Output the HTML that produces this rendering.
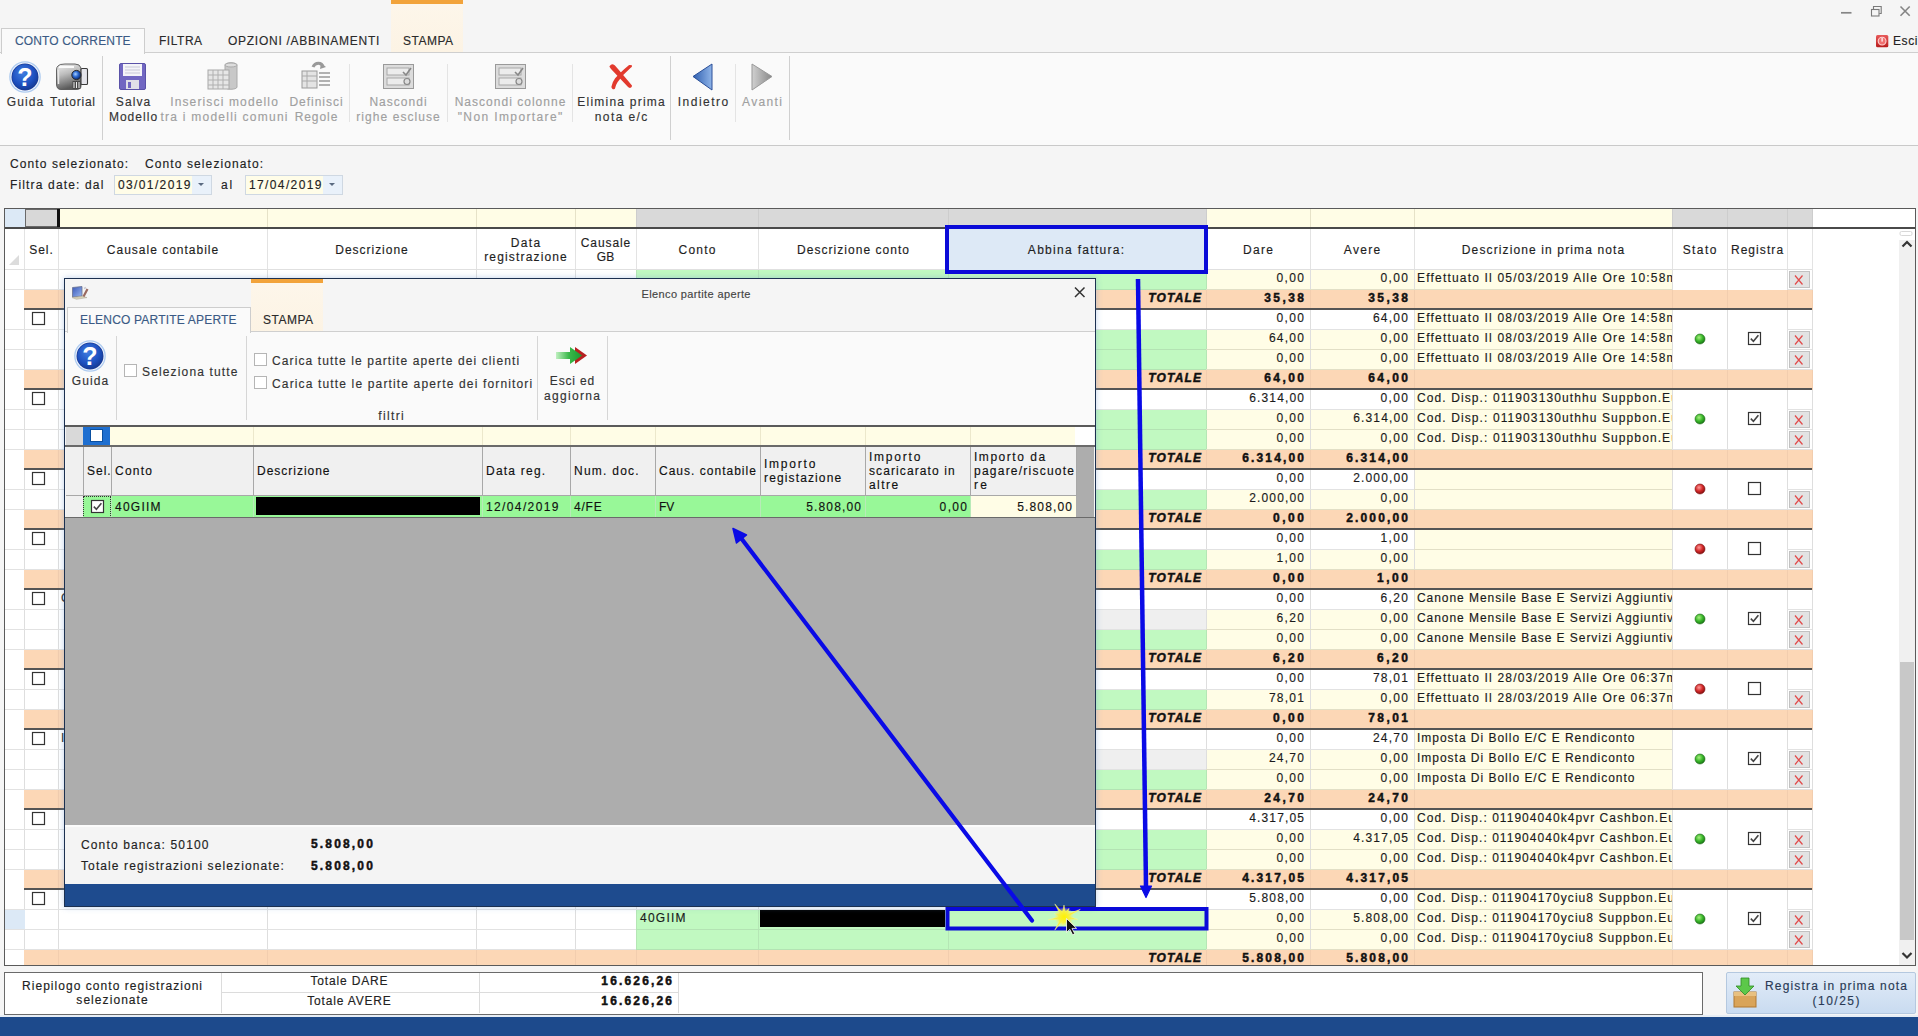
<!DOCTYPE html>
<html><head><meta charset="utf-8"><style>
html,body{margin:0;padding:0;}
body{width:1918px;height:1036px;overflow:hidden;position:relative;background:#f5f5f5;font-family:"Liberation Sans", sans-serif;font-size:12px;color:#1e1e1e;}
div{position:absolute;box-sizing:border-box;}
.t{white-space:nowrap;-webkit-text-stroke:0.15px currentColor;}
svg{position:absolute;overflow:visible;}
</style></head><body>

<svg style="left:1838px;top:8px" width="16" height="10"><path d="M3 4.8H13.5" stroke="#858585" stroke-width="1.7"/></svg>
<svg style="left:1866px;top:0px" width="20" height="20"><rect x="5.5" y="9.5" width="7.5" height="6.5" fill="none" stroke="#7a7a7a" stroke-width="1.1"/><path d="M7.5 9.2V6.5H15.2V13.5H13.2" fill="none" stroke="#7a7a7a" stroke-width="1.1"/></svg>
<svg style="left:1898px;top:4px" width="14" height="14"><path d="M2.5 2.5L11.7 11.7M11.7 2.5L2.5 11.7" stroke="#858585" stroke-width="1.6"/></svg>
<svg style="left:1875px;top:33.5px" width="14" height="14"><defs><linearGradient id="esc" x1="0" y1="0" x2="0" y2="1"><stop offset="0" stop-color="#e85a5a"/><stop offset="1" stop-color="#b81c1c"/></linearGradient></defs><rect x="1" y="1" width="12.3" height="12.3" rx="1.5" fill="url(#esc)"/><circle cx="7.1" cy="7.1" r="3.9" fill="#f07070" stroke="#ffd0d0" stroke-width="1.1"/><rect x="6.5" y="4" width="1.2" height="3.6" fill="#fff"/></svg>
<div class="t" style="top:32.84px;font-size:12px;line-height:16px;color:#222;letter-spacing:0.577px;left:1893px;">Esci</div>
<div style="left:391px;top:0px;width:72px;height:4px;background:#f2a33a;"></div>
<div style="left:391px;top:4px;width:72px;height:48px;background:linear-gradient(#fdf6ea,#fcf3e4);"></div>
<div style="left:0px;top:52px;width:1918px;height:1px;background:#cfcfcf;"></div>
<div style="left:0px;top:53px;width:1918px;height:92px;background:#fafafa;"></div>
<div style="left:0px;top:145px;width:1918px;height:1px;background:#c9c9c9;"></div>
<div style="left:1px;top:28px;width:144px;height:26px;background:#fafafa;border:1px solid #cdcdcd;border-bottom:none;"></div>
<div class="t" style="top:32.84px;font-size:12px;line-height:16px;color:#3a5a85;letter-spacing:0.14px;left:15px;">CONTO CORRENTE</div>
<div class="t" style="top:32.84px;font-size:12px;line-height:16px;color:#2a2a2a;letter-spacing:0.534px;left:159px;">FILTRA</div>
<div class="t" style="top:32.84px;font-size:12px;line-height:16px;color:#2a2a2a;letter-spacing:0.734px;left:228px;">OPZIONI /ABBINAMENTI</div>
<div class="t" style="top:32.84px;font-size:12px;line-height:16px;color:#2a2a2a;letter-spacing:0.492px;left:403px;">STAMPA</div>
<div style="left:102px;top:56px;width:1px;height:84px;background:#d0d0d0;"></div>
<div style="left:349px;top:64px;width:1px;height:58px;background:#e4e4e4;"></div>
<div style="left:447px;top:64px;width:1px;height:58px;background:#e4e4e4;"></div>
<div style="left:572px;top:64px;width:1px;height:58px;background:#e4e4e4;"></div>
<div style="left:670px;top:56px;width:1px;height:84px;background:#d0d0d0;"></div>
<div style="left:735px;top:64px;width:1px;height:58px;background:#e4e4e4;"></div>
<div style="left:789px;top:56px;width:1px;height:84px;background:#d0d0d0;"></div>
<svg style="left:8px;top:60px" width="34" height="34"><defs><radialGradient id="gq25" cx="42%" cy="35%" r="70%"><stop offset="0" stop-color="#3f7ee0"/><stop offset="0.65" stop-color="#1d4fbf"/><stop offset="1" stop-color="#15388f"/></radialGradient></defs>
<circle cx="17" cy="17" r="15.8" fill="#aecbf0"/><circle cx="17" cy="17" r="14.5" fill="#f4f8ff"/><circle cx="17" cy="17" r="13.5" fill="#1a3c96"/><circle cx="17" cy="17" r="12.700000000000001" fill="url(#gq25)"/>
<text x="17" y="26.3" text-anchor="middle" font-family="Liberation Sans" font-weight="bold" font-size="25" fill="#fff">?</text></svg>
<div class="t" style="top:93.84px;font-size:12px;line-height:16px;color:#333;letter-spacing:1.119px;left:-474.44px;width:1000px;text-align:center;">Guida</div>
<svg style="left:55px;top:62px" width="34" height="30"><defs><linearGradient id="cam" x1="0" y1="0" x2="0.3" y2="1"><stop offset="0" stop-color="#f2f2f2"/><stop offset="0.45" stop-color="#bdbdbd"/><stop offset="1" stop-color="#5a5a5a"/></linearGradient><radialGradient id="lens" cx="40%" cy="40%" r="60%"><stop offset="0" stop-color="#a8d0ff"/><stop offset="0.5" stop-color="#2a68d0"/><stop offset="1" stop-color="#0c2a70"/></radialGradient></defs>
<path d="M3 4Q4 2 10 2H20Q25 2 26 6V24Q26 27.5 21 27.5H6Q1.5 27.5 1.5 22V8Q1.5 5 3 4z" fill="url(#cam)" stroke="#555" stroke-width="0.9"/>
<path d="M4 5H19" stroke="#fafafa" stroke-width="2"/><path d="M3.5 8V22" stroke="#e6e6e6" stroke-width="1.5"/>
<rect x="26" y="6.5" width="6.5" height="16" rx="1" fill="#e4e4ea" stroke="#3a3a3a" stroke-width="1.1"/>
<circle cx="21.4" cy="13" r="4.6" fill="url(#lens)" stroke="#2a2a2a" stroke-width="1"/>
<rect x="17.5" y="19" width="8" height="8" fill="#4a4a4a"/><path d="M19 20v6M21.5 20v6M24 20v6" stroke="#f0f0f0" stroke-width="1"/></svg>
<div class="t" style="top:93.84px;font-size:12px;line-height:16px;color:#333;letter-spacing:0.775px;left:-427.11px;width:1000px;text-align:center;">Tutorial</div>
<svg style="left:119px;top:63px" width="27" height="27"><rect x="0.5" y="0.5" width="26" height="26" rx="1.5" fill="#7167c2" stroke="#5a52a8"/>
<rect x="4" y="1" width="19" height="12" fill="#f4f4f8"/><path d="M6 4h15M6 7h15M6 10h15" stroke="#c8c8d8" stroke-width="1"/>
<rect x="7" y="17" width="13" height="9" fill="#e0e0e8"/><rect x="9" y="19" width="3" height="6" fill="#7167c2"/></svg>
<div class="t" style="top:93.84px;font-size:12px;line-height:16px;color:#333;letter-spacing:1.101px;left:-366.45px;width:1000px;text-align:center;">Salva</div>
<div class="t" style="top:108.84px;font-size:12px;line-height:16px;color:#333;letter-spacing:1.038px;left:-366.48px;width:1000px;text-align:center;">Modello</div>
<svg style="left:207px;top:61px" width="33" height="30"><path d="M18 4c0-3 12-3 12 0v22c0 3-12 3-12 0z" fill="#c8c8c8" stroke="#aaa"/><ellipse cx="24" cy="4" rx="6" ry="2" fill="#ddd" stroke="#aaa"/>
<rect x="1" y="9" width="21" height="19" fill="#e6e6e6" stroke="#a8a8a8"/><path d="M1 14h21M1 19h21M1 24h21M6 9v19M11 9v19M16 9v19" stroke="#b0b0b0" stroke-width="1"/></svg>
<div class="t" style="top:93.84px;font-size:12px;line-height:16px;color:#a0a0a0;letter-spacing:1.144px;left:-275.43px;width:1000px;text-align:center;">Inserisci modello</div>
<div class="t" style="top:108.84px;font-size:12px;line-height:16px;color:#a0a0a0;letter-spacing:1.24px;left:-275.38px;width:1000px;text-align:center;">tra i modelli comuni</div>
<svg style="left:301px;top:61px" width="31" height="29"><path d="M12 6c2-5 9-5 10 0" fill="none" stroke="#999" stroke-width="3"/><path d="M20 2l5 4-6 2z" fill="#999"/>
<rect x="1" y="10" width="15" height="17" fill="#e4e4e4" stroke="#9a9a9a"/><path d="M1 15h15M1 20h15M6 10v17" stroke="#aaa"/>
<path d="M18 12h11M18 16h11M18 20h11M18 24h11" stroke="#999" stroke-width="1.6"/></svg>
<div class="t" style="top:93.84px;font-size:12px;line-height:16px;color:#a0a0a0;letter-spacing:0.975px;left:-183.51px;width:1000px;text-align:center;">Definisci</div>
<div class="t" style="top:108.84px;font-size:12px;line-height:16px;color:#a0a0a0;letter-spacing:0.943px;left:-183.53px;width:1000px;text-align:center;">Regole</div>
<svg style="left:383px;top:64px" width="31" height="26"><rect x="0.5" y="0.5" width="30" height="24" fill="#dcdcdc" stroke="#9a9a9a"/>
<rect x="4" y="4" width="22" height="7" fill="#ececec" stroke="#a8a8a8"/><rect x="4" y="14" width="22" height="7" fill="#ececec" stroke="#a8a8a8"/>
<path d="M20 8l3 3 5-7" fill="none" stroke="#888" stroke-width="1.6"/><circle cx="24" cy="17.5" r="3" fill="#ddd" stroke="#888" stroke-width="1.2"/></svg>
<div class="t" style="top:93.84px;font-size:12px;line-height:16px;color:#a0a0a0;letter-spacing:1.013px;left:-101.49px;width:1000px;text-align:center;">Nascondi</div>
<div class="t" style="top:108.84px;font-size:12px;line-height:16px;color:#a0a0a0;letter-spacing:1.057px;left:-101.47px;width:1000px;text-align:center;">righe escluse</div>
<svg style="left:495px;top:64px" width="31" height="26"><rect x="0.5" y="0.5" width="30" height="24" fill="#dcdcdc" stroke="#9a9a9a"/>
<rect x="4" y="4" width="22" height="7" fill="#ececec" stroke="#a8a8a8"/><rect x="4" y="14" width="22" height="7" fill="#ececec" stroke="#a8a8a8"/>
<path d="M20 8l3 3 5-7" fill="none" stroke="#888" stroke-width="1.6"/><circle cx="24" cy="17.5" r="3" fill="#ddd" stroke="#888" stroke-width="1.2"/></svg>
<div class="t" style="top:93.84px;font-size:12px;line-height:16px;color:#a0a0a0;letter-spacing:1.018px;left:10.51px;width:1000px;text-align:center;">Nascondi colonne</div>
<div class="t" style="top:108.84px;font-size:12px;line-height:16px;color:#a0a0a0;letter-spacing:1.379px;left:10.69px;width:1000px;text-align:center;">"Non Importare"</div>
<svg style="left:609px;top:63px" width="24" height="27"><path d="M1.5 3.5Q3 1.5 5 3Q12 11 22 23Q21.5 24.5 20 23.5Q11 14 2.5 5z" fill="#e23a2e" stroke="#e23a2e" stroke-width="2" stroke-linejoin="round"/><path d="M21.5 3.5Q22.5 2.5 21 4Q13 11 8 18Q5.5 22 5 25Q4 25.5 3.5 24Q4 20 7 16Q12 10 20.5 3z" fill="#e23a2e" stroke="#e23a2e" stroke-width="2.2" stroke-linejoin="round"/></svg>
<div class="t" style="top:93.84px;font-size:12px;line-height:16px;color:#333;letter-spacing:1.223px;left:121.61px;width:1000px;text-align:center;">Elimina prima</div>
<div class="t" style="top:108.84px;font-size:12px;line-height:16px;color:#333;letter-spacing:1.378px;left:121.69px;width:1000px;text-align:center;">nota e/c</div>
<svg style="left:692px;top:63px" width="22" height="28"><defs><linearGradient id="lt" x1="0" y1="0" x2="1" y2="0"><stop offset="0" stop-color="#2f5fb0"/><stop offset="1" stop-color="#8fb4e8"/></linearGradient></defs><path d="M1 13.5L20 1v26z" fill="url(#lt)" stroke="#2a4f98" stroke-width="1"/></svg>
<div class="t" style="top:93.84px;font-size:12px;line-height:16px;color:#333;letter-spacing:1.476px;left:203.74px;width:1000px;text-align:center;">Indietro</div>
<svg style="left:750px;top:63px" width="23" height="28"><defs><linearGradient id="rt" x1="0" y1="0" x2="1" y2="0"><stop offset="0" stop-color="#d0d0d0"/><stop offset="1" stop-color="#888"/></linearGradient></defs><path d="M22 13.5L2 1v26z" fill="url(#rt)" stroke="#999" stroke-width="1"/></svg>
<div class="t" style="top:93.84px;font-size:12px;line-height:16px;color:#a0a0a0;letter-spacing:1.34px;left:262.67px;width:1000px;text-align:center;">Avanti</div>
<div class="t" style="top:155.84px;font-size:12px;line-height:16px;color:#222;letter-spacing:1.103px;left:10px;">Conto selezionato:</div>
<div class="t" style="top:155.84px;font-size:12px;line-height:16px;color:#222;letter-spacing:1.103px;left:145px;">Conto selezionato:</div>
<div class="t" style="top:176.84px;font-size:12px;line-height:16px;color:#222;letter-spacing:1.151px;left:10px;">Filtra date: dal</div>
<div class="t" style="top:176.84px;font-size:12px;line-height:16px;color:#222;letter-spacing:1.78px;left:221px;">al</div>
<div style="left:114px;top:175px;width:98px;height:20px;background:#fffde8;border:1px solid #cfd8e2;"></div>
<div style="left:192px;top:176px;width:19px;height:18px;background:#e9f1fa;"></div>
<svg style="left:198px;top:183px" width="7" height="4"><path d="M0 0h6L3 3z" fill="#5a6a80"/></svg>
<div class="t" style="top:176.84px;font-size:12px;line-height:16px;color:#222;letter-spacing:1.373px;left:118px;">03/01/2019</div>
<div style="left:245px;top:175px;width:98px;height:20px;background:#fffde8;border:1px solid #cfd8e2;"></div>
<div style="left:323px;top:176px;width:19px;height:18px;background:#e9f1fa;"></div>
<svg style="left:329px;top:183px" width="7" height="4"><path d="M0 0h6L3 3z" fill="#5a6a80"/></svg>
<div class="t" style="top:176.84px;font-size:12px;line-height:16px;color:#222;letter-spacing:1.373px;left:249px;">17/04/2019</div>
<div style="left:4px;top:208px;width:1912px;height:758px;background:#fff;border:1px solid #5a5a5a;"></div>
<div style="left:5px;top:209px;width:20px;height:18px;background:#dce9f6;"></div>
<div style="left:25px;top:209px;width:33px;height:18px;background:#d8d8d8;border:1px solid #6a6a6a;"></div>
<div style="left:57px;top:209px;width:3px;height:18px;background:#111;"></div>
<div style="left:60px;top:209px;width:576px;height:18px;background:#fffde6;"></div>
<div style="left:636px;top:209px;width:570px;height:18px;background:#d9d9d9;"></div>
<div style="left:1206px;top:209px;width:466px;height:18px;background:#fffde6;"></div>
<div style="left:1672px;top:209px;width:140px;height:18px;background:#d9d9d9;"></div>
<div style="left:267px;top:209px;width:1px;height:18px;background:#e6e2c8;"></div>
<div style="left:476px;top:209px;width:1px;height:18px;background:#e6e2c8;"></div>
<div style="left:575px;top:209px;width:1px;height:18px;background:#e6e2c8;"></div>
<div style="left:636px;top:209px;width:1px;height:18px;background:#cdcdcd;"></div>
<div style="left:758px;top:209px;width:1px;height:18px;background:#cdcdcd;"></div>
<div style="left:948px;top:209px;width:1px;height:18px;background:#cdcdcd;"></div>
<div style="left:1206px;top:209px;width:1px;height:18px;background:#cdcdcd;"></div>
<div style="left:1310px;top:209px;width:1px;height:18px;background:#e6e2c8;"></div>
<div style="left:1414px;top:209px;width:1px;height:18px;background:#e6e2c8;"></div>
<div style="left:1672px;top:209px;width:1px;height:18px;background:#cdcdcd;"></div>
<div style="left:1727px;top:209px;width:1px;height:18px;background:#cdcdcd;"></div>
<div style="left:1787px;top:209px;width:1px;height:18px;background:#cdcdcd;"></div>
<div style="left:1812px;top:209px;width:1px;height:18px;background:#cdcdcd;"></div>
<div style="left:5px;top:227px;width:1910px;height:2px;background:#4a4a4a;"></div>
<div style="left:24px;top:229px;width:1px;height:41px;background:#e3e3e3;"></div>
<div style="left:58px;top:229px;width:1px;height:41px;background:#e3e3e3;"></div>
<div style="left:267px;top:229px;width:1px;height:41px;background:#e3e3e3;"></div>
<div style="left:476px;top:229px;width:1px;height:41px;background:#e3e3e3;"></div>
<div style="left:575px;top:229px;width:1px;height:41px;background:#e3e3e3;"></div>
<div style="left:636px;top:229px;width:1px;height:41px;background:#e3e3e3;"></div>
<div style="left:758px;top:229px;width:1px;height:41px;background:#e3e3e3;"></div>
<div style="left:948px;top:229px;width:1px;height:41px;background:#e3e3e3;"></div>
<div style="left:1206px;top:229px;width:1px;height:41px;background:#e3e3e3;"></div>
<div style="left:1310px;top:229px;width:1px;height:41px;background:#e3e3e3;"></div>
<div style="left:1414px;top:229px;width:1px;height:41px;background:#e3e3e3;"></div>
<div style="left:1672px;top:229px;width:1px;height:41px;background:#e3e3e3;"></div>
<div style="left:1727px;top:229px;width:1px;height:41px;background:#e3e3e3;"></div>
<div style="left:1787px;top:229px;width:1px;height:41px;background:#e3e3e3;"></div>
<div style="left:1812px;top:229px;width:1px;height:41px;background:#e3e3e3;"></div>
<div style="left:5px;top:269px;width:1807px;height:1px;background:#e0e0e0;"></div>
<svg style="left:8px;top:254px" width="12" height="12"><path d="M11 1V11H1z" fill="#dcdcdc"/></svg>
<div class="t" style="top:241.84px;font-size:12px;line-height:16px;color:#1e1e1e;letter-spacing:0.991px;left:-458.50px;width:1000px;text-align:center;">Sel.</div>
<div class="t" style="top:241.84px;font-size:12px;line-height:16px;color:#1e1e1e;letter-spacing:0.996px;left:-337.00px;width:1000px;text-align:center;">Causale contabile</div>
<div class="t" style="top:241.84px;font-size:12px;line-height:16px;color:#1e1e1e;letter-spacing:0.983px;left:-128.01px;width:1000px;text-align:center;">Descrizione</div>
<div class="t" style="top:234.84px;font-size:12px;line-height:16px;color:#1e1e1e;letter-spacing:1.423px;left:26.21px;width:1000px;text-align:center;">Data</div>
<div class="t" style="top:248.84px;font-size:12px;line-height:16px;color:#1e1e1e;letter-spacing:1.155px;left:26.08px;width:1000px;text-align:center;">registrazione</div>
<div class="t" style="top:234.84px;font-size:12px;line-height:16px;color:#1e1e1e;letter-spacing:0.907px;left:105.95px;width:1000px;text-align:center;">Causale</div>
<div class="t" style="top:248.84px;font-size:12px;line-height:16px;color:#1e1e1e;letter-spacing:0.378px;left:105.69px;width:1000px;text-align:center;">GB</div>
<div class="t" style="top:241.84px;font-size:12px;line-height:16px;color:#1e1e1e;letter-spacing:1.228px;left:197.61px;width:1000px;text-align:center;">Conto</div>
<div class="t" style="top:241.84px;font-size:12px;line-height:16px;color:#1e1e1e;letter-spacing:1.037px;left:353.52px;width:1000px;text-align:center;">Descrizione conto</div>
<div class="t" style="top:241.84px;font-size:12px;line-height:16px;color:#1e1e1e;letter-spacing:1.304px;left:577.65px;width:1000px;text-align:center;">Abbina fattura:</div>
<div class="t" style="top:241.84px;font-size:12px;line-height:16px;color:#1e1e1e;letter-spacing:1.319px;left:758.66px;width:1000px;text-align:center;">Dare</div>
<div class="t" style="top:241.84px;font-size:12px;line-height:16px;color:#1e1e1e;letter-spacing:1.274px;left:862.64px;width:1000px;text-align:center;">Avere</div>
<div class="t" style="top:241.84px;font-size:12px;line-height:16px;color:#1e1e1e;letter-spacing:1.123px;left:1043.56px;width:1000px;text-align:center;">Descrizione in prima nota</div>
<div class="t" style="top:241.84px;font-size:12px;line-height:16px;color:#1e1e1e;letter-spacing:1.419px;left:1200.21px;width:1000px;text-align:center;">Stato</div>
<div class="t" style="top:241.84px;font-size:12px;line-height:16px;color:#1e1e1e;letter-spacing:1.069px;left:1257.53px;width:1000px;text-align:center;">Registra</div>
<div style="left:5px;top:270px;width:1894px;height:695px;overflow:hidden;">
<div style="left:631px;top:0px;width:570px;height:20px;background:#c1f9c1;"></div>
<div style="left:1201px;top:0px;width:208px;height:20px;background:#fffde6;"></div>
<div style="left:1409px;top:0px;width:258px;height:20px;background:#fffde6;"></div>
<div style="left:19px;top:0px;width:1px;height:20px;background:#dedede;"></div>
<div style="left:53px;top:0px;width:1px;height:20px;background:#dedede;"></div>
<div style="left:262px;top:0px;width:1px;height:20px;background:#dedede;"></div>
<div style="left:471px;top:0px;width:1px;height:20px;background:#dedede;"></div>
<div style="left:570px;top:0px;width:1px;height:20px;background:#dedede;"></div>
<div style="left:631px;top:0px;width:1px;height:20px;background:#b5e6b5;"></div>
<div style="left:753px;top:0px;width:1px;height:20px;background:#b5e6b5;"></div>
<div style="left:943px;top:0px;width:1px;height:20px;background:#b5e6b5;"></div>
<div style="left:1201px;top:0px;width:1px;height:20px;background:#b5e6b5;"></div>
<div style="left:1305px;top:0px;width:1px;height:20px;background:#dedede;"></div>
<div style="left:1409px;top:0px;width:1px;height:20px;background:#dedede;"></div>
<div style="left:1667px;top:0px;width:1px;height:20px;background:#dedede;"></div>
<div style="left:1722px;top:0px;width:1px;height:20px;background:#dedede;"></div>
<div style="left:1782px;top:0px;width:1px;height:20px;background:#dedede;"></div>
<div style="left:1807px;top:0px;width:1px;height:20px;background:#dedede;"></div>
<div style="left:0px;top:19px;width:631px;height:1px;background:#e2e2e2;"></div>
<div style="left:631px;top:19px;width:570px;height:1px;background:#b3e3b3;"></div>
<div style="left:1201px;top:19px;width:466px;height:1px;background:#e2dfc6;"></div>
<div style="left:1409px;top:19px;width:258px;height:1px;background:#e2dfc6;"></div>
<div style="left:1782px;top:19px;width:25px;height:1px;background:#e2e2e2;"></div>
<div class="t" style="top:-0.16px;font-size:12px;line-height:16px;color:#1a1a1a;letter-spacing:1.344px;left:300.34px;width:1000px;text-align:right;">0,00</div>
<div class="t" style="top:-0.16px;font-size:12px;line-height:16px;color:#1a1a1a;letter-spacing:1.344px;left:404.34px;width:1000px;text-align:right;">0,00</div>
<div style="left:1410px;top:0px;width:257px;height:20px;overflow:hidden;">
<div class="t" style="top:-0.16px;font-size:12px;line-height:16px;color:#1a1a1a;letter-spacing:1.188px;left:2px;">Effettuato Il 05/03/2019 Alle Ore 10:58m</div>
</div>
<div style="left:1784px;top:1px;width:21px;height:17px;background:#e3e3e3;border:1px solid #c2c2c2;"></div>
<svg style="left:1789px;top:5px" width="10" height="11"><path d="M1 0.5L8.5 9.5M8.5 0.5L1 9.5" stroke="#e24a4a" stroke-width="1.2"/></svg>
<div style="left:19px;top:20px;width:1788px;height:20px;background:#fcd7b6;"></div>
<div style="left:53px;top:20px;width:1px;height:20px;background:#f2cdae;"></div>
<div style="left:262px;top:20px;width:1px;height:20px;background:#f2cdae;"></div>
<div style="left:471px;top:20px;width:1px;height:20px;background:#f2cdae;"></div>
<div style="left:570px;top:20px;width:1px;height:20px;background:#f2cdae;"></div>
<div style="left:631px;top:20px;width:1px;height:20px;background:#f2cdae;"></div>
<div style="left:753px;top:20px;width:1px;height:20px;background:#f2cdae;"></div>
<div style="left:943px;top:20px;width:1px;height:20px;background:#f2cdae;"></div>
<div style="left:1201px;top:20px;width:1px;height:20px;background:#f2cdae;"></div>
<div style="left:1305px;top:20px;width:1px;height:20px;background:#f2cdae;"></div>
<div style="left:1409px;top:20px;width:1px;height:20px;background:#f2cdae;"></div>
<div style="left:1667px;top:20px;width:1px;height:20px;background:#f2cdae;"></div>
<div style="left:1722px;top:20px;width:1px;height:20px;background:#f2cdae;"></div>
<div style="left:1782px;top:20px;width:1px;height:20px;background:#f2cdae;"></div>
<div style="left:1807px;top:20px;width:1px;height:20px;background:#f2cdae;"></div>
<div style="left:19px;top:38px;width:1788px;height:2px;background:#555555;"></div>
<div class="t" style="top:19.84px;font-size:12px;line-height:16px;color:#111;font-weight:bold;-webkit-text-stroke:0.45px currentColor;font-style:italic;letter-spacing:1.177px;left:197.18px;width:1000px;text-align:right;">TOTALE</div>
<div class="t" style="top:19.84px;font-size:12px;line-height:16px;color:#111;font-weight:bold;-webkit-text-stroke:0.45px currentColor;letter-spacing:2.434px;left:301.43px;width:1000px;text-align:right;">35,38</div>
<div class="t" style="top:19.84px;font-size:12px;line-height:16px;color:#111;font-weight:bold;-webkit-text-stroke:0.45px currentColor;letter-spacing:2.434px;left:405.43px;width:1000px;text-align:right;">35,38</div>
<div style="left:631px;top:40px;width:570px;height:20px;background:#fff;"></div>
<div style="left:1201px;top:40px;width:208px;height:20px;background:#fff;"></div>
<div style="left:1409px;top:40px;width:258px;height:20px;background:#fffde6;"></div>
<div style="left:19px;top:40px;width:1px;height:20px;background:#dedede;"></div>
<div style="left:53px;top:40px;width:1px;height:20px;background:#dedede;"></div>
<div style="left:262px;top:40px;width:1px;height:20px;background:#dedede;"></div>
<div style="left:471px;top:40px;width:1px;height:20px;background:#dedede;"></div>
<div style="left:570px;top:40px;width:1px;height:20px;background:#dedede;"></div>
<div style="left:631px;top:40px;width:1px;height:20px;background:#dedede;"></div>
<div style="left:753px;top:40px;width:1px;height:20px;background:#dedede;"></div>
<div style="left:943px;top:40px;width:1px;height:20px;background:#dedede;"></div>
<div style="left:1201px;top:40px;width:1px;height:20px;background:#dedede;"></div>
<div style="left:1305px;top:40px;width:1px;height:20px;background:#dedede;"></div>
<div style="left:1409px;top:40px;width:1px;height:20px;background:#dedede;"></div>
<div style="left:1667px;top:40px;width:1px;height:20px;background:#dedede;"></div>
<div style="left:1722px;top:40px;width:1px;height:20px;background:#dedede;"></div>
<div style="left:1782px;top:40px;width:1px;height:20px;background:#dedede;"></div>
<div style="left:1807px;top:40px;width:1px;height:20px;background:#dedede;"></div>
<div style="left:0px;top:59px;width:631px;height:1px;background:#e2e2e2;"></div>
<div style="left:631px;top:59px;width:570px;height:1px;background:#e2e2e2;"></div>
<div style="left:1201px;top:59px;width:466px;height:1px;background:#e2e2e2;"></div>
<div style="left:1409px;top:59px;width:258px;height:1px;background:#e2dfc6;"></div>
<div style="left:1782px;top:59px;width:25px;height:1px;background:#e2e2e2;"></div>
<div class="t" style="top:39.84px;font-size:12px;line-height:16px;color:#1a1a1a;letter-spacing:1.344px;left:300.34px;width:1000px;text-align:right;">0,00</div>
<div class="t" style="top:39.84px;font-size:12px;line-height:16px;color:#1a1a1a;letter-spacing:1.267px;left:404.27px;width:1000px;text-align:right;">64,00</div>
<div style="left:1410px;top:40px;width:257px;height:20px;overflow:hidden;">
<div class="t" style="top:-0.16px;font-size:12px;line-height:16px;color:#1a1a1a;letter-spacing:1.188px;left:2px;">Effettuato Il 08/03/2019 Alle Ore 14:58m</div>
</div>
<div style="left:631px;top:60px;width:570px;height:20px;background:#c1f9c1;"></div>
<div style="left:1201px;top:60px;width:208px;height:20px;background:#fffde6;"></div>
<div style="left:1409px;top:60px;width:258px;height:20px;background:#fffde6;"></div>
<div style="left:19px;top:60px;width:1px;height:20px;background:#dedede;"></div>
<div style="left:53px;top:60px;width:1px;height:20px;background:#dedede;"></div>
<div style="left:262px;top:60px;width:1px;height:20px;background:#dedede;"></div>
<div style="left:471px;top:60px;width:1px;height:20px;background:#dedede;"></div>
<div style="left:570px;top:60px;width:1px;height:20px;background:#dedede;"></div>
<div style="left:631px;top:60px;width:1px;height:20px;background:#b5e6b5;"></div>
<div style="left:753px;top:60px;width:1px;height:20px;background:#b5e6b5;"></div>
<div style="left:943px;top:60px;width:1px;height:20px;background:#b5e6b5;"></div>
<div style="left:1201px;top:60px;width:1px;height:20px;background:#b5e6b5;"></div>
<div style="left:1305px;top:60px;width:1px;height:20px;background:#dedede;"></div>
<div style="left:1409px;top:60px;width:1px;height:20px;background:#dedede;"></div>
<div style="left:1667px;top:60px;width:1px;height:20px;background:#dedede;"></div>
<div style="left:1722px;top:60px;width:1px;height:20px;background:#dedede;"></div>
<div style="left:1782px;top:60px;width:1px;height:20px;background:#dedede;"></div>
<div style="left:1807px;top:60px;width:1px;height:20px;background:#dedede;"></div>
<div style="left:0px;top:79px;width:631px;height:1px;background:#e2e2e2;"></div>
<div style="left:631px;top:79px;width:570px;height:1px;background:#b3e3b3;"></div>
<div style="left:1201px;top:79px;width:466px;height:1px;background:#e2dfc6;"></div>
<div style="left:1409px;top:79px;width:258px;height:1px;background:#e2dfc6;"></div>
<div style="left:1782px;top:79px;width:25px;height:1px;background:#e2e2e2;"></div>
<div class="t" style="top:59.84px;font-size:12px;line-height:16px;color:#1a1a1a;letter-spacing:1.267px;left:300.27px;width:1000px;text-align:right;">64,00</div>
<div class="t" style="top:59.84px;font-size:12px;line-height:16px;color:#1a1a1a;letter-spacing:1.344px;left:404.34px;width:1000px;text-align:right;">0,00</div>
<div style="left:1410px;top:60px;width:257px;height:20px;overflow:hidden;">
<div class="t" style="top:-0.16px;font-size:12px;line-height:16px;color:#1a1a1a;letter-spacing:1.188px;left:2px;">Effettuato Il 08/03/2019 Alle Ore 14:58m</div>
</div>
<div style="left:1784px;top:61px;width:21px;height:17px;background:#e3e3e3;border:1px solid #c2c2c2;"></div>
<svg style="left:1789px;top:65px" width="10" height="11"><path d="M1 0.5L8.5 9.5M8.5 0.5L1 9.5" stroke="#e24a4a" stroke-width="1.2"/></svg>
<div style="left:631px;top:80px;width:570px;height:20px;background:#c1f9c1;"></div>
<div style="left:1201px;top:80px;width:208px;height:20px;background:#fffde6;"></div>
<div style="left:1409px;top:80px;width:258px;height:20px;background:#fffde6;"></div>
<div style="left:19px;top:80px;width:1px;height:20px;background:#dedede;"></div>
<div style="left:53px;top:80px;width:1px;height:20px;background:#dedede;"></div>
<div style="left:262px;top:80px;width:1px;height:20px;background:#dedede;"></div>
<div style="left:471px;top:80px;width:1px;height:20px;background:#dedede;"></div>
<div style="left:570px;top:80px;width:1px;height:20px;background:#dedede;"></div>
<div style="left:631px;top:80px;width:1px;height:20px;background:#b5e6b5;"></div>
<div style="left:753px;top:80px;width:1px;height:20px;background:#b5e6b5;"></div>
<div style="left:943px;top:80px;width:1px;height:20px;background:#b5e6b5;"></div>
<div style="left:1201px;top:80px;width:1px;height:20px;background:#b5e6b5;"></div>
<div style="left:1305px;top:80px;width:1px;height:20px;background:#dedede;"></div>
<div style="left:1409px;top:80px;width:1px;height:20px;background:#dedede;"></div>
<div style="left:1667px;top:80px;width:1px;height:20px;background:#dedede;"></div>
<div style="left:1722px;top:80px;width:1px;height:20px;background:#dedede;"></div>
<div style="left:1782px;top:80px;width:1px;height:20px;background:#dedede;"></div>
<div style="left:1807px;top:80px;width:1px;height:20px;background:#dedede;"></div>
<div style="left:0px;top:99px;width:631px;height:1px;background:#e2e2e2;"></div>
<div style="left:631px;top:99px;width:570px;height:1px;background:#b3e3b3;"></div>
<div style="left:1201px;top:99px;width:466px;height:1px;background:#e2dfc6;"></div>
<div style="left:1409px;top:99px;width:258px;height:1px;background:#e2dfc6;"></div>
<div style="left:1782px;top:99px;width:25px;height:1px;background:#e2e2e2;"></div>
<div class="t" style="top:79.84px;font-size:12px;line-height:16px;color:#1a1a1a;letter-spacing:1.344px;left:300.34px;width:1000px;text-align:right;">0,00</div>
<div class="t" style="top:79.84px;font-size:12px;line-height:16px;color:#1a1a1a;letter-spacing:1.344px;left:404.34px;width:1000px;text-align:right;">0,00</div>
<div style="left:1410px;top:80px;width:257px;height:20px;overflow:hidden;">
<div class="t" style="top:-0.16px;font-size:12px;line-height:16px;color:#1a1a1a;letter-spacing:1.188px;left:2px;">Effettuato Il 08/03/2019 Alle Ore 14:58m</div>
</div>
<div style="left:1784px;top:81px;width:21px;height:17px;background:#e3e3e3;border:1px solid #c2c2c2;"></div>
<svg style="left:1789px;top:85px" width="10" height="11"><path d="M1 0.5L8.5 9.5M8.5 0.5L1 9.5" stroke="#e24a4a" stroke-width="1.2"/></svg>
<div style="left:19px;top:100px;width:1788px;height:20px;background:#fcd7b6;"></div>
<div style="left:53px;top:100px;width:1px;height:20px;background:#f2cdae;"></div>
<div style="left:262px;top:100px;width:1px;height:20px;background:#f2cdae;"></div>
<div style="left:471px;top:100px;width:1px;height:20px;background:#f2cdae;"></div>
<div style="left:570px;top:100px;width:1px;height:20px;background:#f2cdae;"></div>
<div style="left:631px;top:100px;width:1px;height:20px;background:#f2cdae;"></div>
<div style="left:753px;top:100px;width:1px;height:20px;background:#f2cdae;"></div>
<div style="left:943px;top:100px;width:1px;height:20px;background:#f2cdae;"></div>
<div style="left:1201px;top:100px;width:1px;height:20px;background:#f2cdae;"></div>
<div style="left:1305px;top:100px;width:1px;height:20px;background:#f2cdae;"></div>
<div style="left:1409px;top:100px;width:1px;height:20px;background:#f2cdae;"></div>
<div style="left:1667px;top:100px;width:1px;height:20px;background:#f2cdae;"></div>
<div style="left:1722px;top:100px;width:1px;height:20px;background:#f2cdae;"></div>
<div style="left:1782px;top:100px;width:1px;height:20px;background:#f2cdae;"></div>
<div style="left:1807px;top:100px;width:1px;height:20px;background:#f2cdae;"></div>
<div style="left:19px;top:118px;width:1788px;height:2px;background:#555555;"></div>
<div class="t" style="top:99.84px;font-size:12px;line-height:16px;color:#111;font-weight:bold;-webkit-text-stroke:0.45px currentColor;font-style:italic;letter-spacing:1.177px;left:197.18px;width:1000px;text-align:right;">TOTALE</div>
<div class="t" style="top:99.84px;font-size:12px;line-height:16px;color:#111;font-weight:bold;-webkit-text-stroke:0.45px currentColor;letter-spacing:2.434px;left:301.43px;width:1000px;text-align:right;">64,00</div>
<div class="t" style="top:99.84px;font-size:12px;line-height:16px;color:#111;font-weight:bold;-webkit-text-stroke:0.45px currentColor;letter-spacing:2.434px;left:405.43px;width:1000px;text-align:right;">64,00</div>
<div style="left:631px;top:120px;width:570px;height:20px;background:#fff;"></div>
<div style="left:1201px;top:120px;width:208px;height:20px;background:#fff;"></div>
<div style="left:1409px;top:120px;width:258px;height:20px;background:#fffde6;"></div>
<div style="left:19px;top:120px;width:1px;height:20px;background:#dedede;"></div>
<div style="left:53px;top:120px;width:1px;height:20px;background:#dedede;"></div>
<div style="left:262px;top:120px;width:1px;height:20px;background:#dedede;"></div>
<div style="left:471px;top:120px;width:1px;height:20px;background:#dedede;"></div>
<div style="left:570px;top:120px;width:1px;height:20px;background:#dedede;"></div>
<div style="left:631px;top:120px;width:1px;height:20px;background:#dedede;"></div>
<div style="left:753px;top:120px;width:1px;height:20px;background:#dedede;"></div>
<div style="left:943px;top:120px;width:1px;height:20px;background:#dedede;"></div>
<div style="left:1201px;top:120px;width:1px;height:20px;background:#dedede;"></div>
<div style="left:1305px;top:120px;width:1px;height:20px;background:#dedede;"></div>
<div style="left:1409px;top:120px;width:1px;height:20px;background:#dedede;"></div>
<div style="left:1667px;top:120px;width:1px;height:20px;background:#dedede;"></div>
<div style="left:1722px;top:120px;width:1px;height:20px;background:#dedede;"></div>
<div style="left:1782px;top:120px;width:1px;height:20px;background:#dedede;"></div>
<div style="left:1807px;top:120px;width:1px;height:20px;background:#dedede;"></div>
<div style="left:0px;top:139px;width:631px;height:1px;background:#e2e2e2;"></div>
<div style="left:631px;top:139px;width:570px;height:1px;background:#e2e2e2;"></div>
<div style="left:1201px;top:139px;width:466px;height:1px;background:#e2e2e2;"></div>
<div style="left:1409px;top:139px;width:258px;height:1px;background:#e2dfc6;"></div>
<div style="left:1782px;top:139px;width:25px;height:1px;background:#e2e2e2;"></div>
<div class="t" style="top:119.84px;font-size:12px;line-height:16px;color:#1a1a1a;letter-spacing:1.152px;left:300.15px;width:1000px;text-align:right;">6.314,00</div>
<div class="t" style="top:119.84px;font-size:12px;line-height:16px;color:#1a1a1a;letter-spacing:1.344px;left:404.34px;width:1000px;text-align:right;">0,00</div>
<div style="left:1410px;top:120px;width:257px;height:20px;overflow:hidden;">
<div class="t" style="top:-0.16px;font-size:12px;line-height:16px;color:#1a1a1a;letter-spacing:1.1px;left:2px;">Cod. Disp.: 011903130uthhu Suppbon.Eu</div>
</div>
<div style="left:631px;top:140px;width:570px;height:20px;background:#c1f9c1;"></div>
<div style="left:1201px;top:140px;width:208px;height:20px;background:#fffde6;"></div>
<div style="left:1409px;top:140px;width:258px;height:20px;background:#fffde6;"></div>
<div style="left:19px;top:140px;width:1px;height:20px;background:#dedede;"></div>
<div style="left:53px;top:140px;width:1px;height:20px;background:#dedede;"></div>
<div style="left:262px;top:140px;width:1px;height:20px;background:#dedede;"></div>
<div style="left:471px;top:140px;width:1px;height:20px;background:#dedede;"></div>
<div style="left:570px;top:140px;width:1px;height:20px;background:#dedede;"></div>
<div style="left:631px;top:140px;width:1px;height:20px;background:#b5e6b5;"></div>
<div style="left:753px;top:140px;width:1px;height:20px;background:#b5e6b5;"></div>
<div style="left:943px;top:140px;width:1px;height:20px;background:#b5e6b5;"></div>
<div style="left:1201px;top:140px;width:1px;height:20px;background:#b5e6b5;"></div>
<div style="left:1305px;top:140px;width:1px;height:20px;background:#dedede;"></div>
<div style="left:1409px;top:140px;width:1px;height:20px;background:#dedede;"></div>
<div style="left:1667px;top:140px;width:1px;height:20px;background:#dedede;"></div>
<div style="left:1722px;top:140px;width:1px;height:20px;background:#dedede;"></div>
<div style="left:1782px;top:140px;width:1px;height:20px;background:#dedede;"></div>
<div style="left:1807px;top:140px;width:1px;height:20px;background:#dedede;"></div>
<div style="left:0px;top:159px;width:631px;height:1px;background:#e2e2e2;"></div>
<div style="left:631px;top:159px;width:570px;height:1px;background:#b3e3b3;"></div>
<div style="left:1201px;top:159px;width:466px;height:1px;background:#e2dfc6;"></div>
<div style="left:1409px;top:159px;width:258px;height:1px;background:#e2dfc6;"></div>
<div style="left:1782px;top:159px;width:25px;height:1px;background:#e2e2e2;"></div>
<div class="t" style="top:139.84px;font-size:12px;line-height:16px;color:#1a1a1a;letter-spacing:1.344px;left:300.34px;width:1000px;text-align:right;">0,00</div>
<div class="t" style="top:139.84px;font-size:12px;line-height:16px;color:#1a1a1a;letter-spacing:1.152px;left:404.15px;width:1000px;text-align:right;">6.314,00</div>
<div style="left:1410px;top:140px;width:257px;height:20px;overflow:hidden;">
<div class="t" style="top:-0.16px;font-size:12px;line-height:16px;color:#1a1a1a;letter-spacing:1.1px;left:2px;">Cod. Disp.: 011903130uthhu Suppbon.Eu</div>
</div>
<div style="left:1784px;top:141px;width:21px;height:17px;background:#e3e3e3;border:1px solid #c2c2c2;"></div>
<svg style="left:1789px;top:145px" width="10" height="11"><path d="M1 0.5L8.5 9.5M8.5 0.5L1 9.5" stroke="#e24a4a" stroke-width="1.2"/></svg>
<div style="left:631px;top:160px;width:570px;height:20px;background:#c1f9c1;"></div>
<div style="left:1201px;top:160px;width:208px;height:20px;background:#fffde6;"></div>
<div style="left:1409px;top:160px;width:258px;height:20px;background:#fffde6;"></div>
<div style="left:19px;top:160px;width:1px;height:20px;background:#dedede;"></div>
<div style="left:53px;top:160px;width:1px;height:20px;background:#dedede;"></div>
<div style="left:262px;top:160px;width:1px;height:20px;background:#dedede;"></div>
<div style="left:471px;top:160px;width:1px;height:20px;background:#dedede;"></div>
<div style="left:570px;top:160px;width:1px;height:20px;background:#dedede;"></div>
<div style="left:631px;top:160px;width:1px;height:20px;background:#b5e6b5;"></div>
<div style="left:753px;top:160px;width:1px;height:20px;background:#b5e6b5;"></div>
<div style="left:943px;top:160px;width:1px;height:20px;background:#b5e6b5;"></div>
<div style="left:1201px;top:160px;width:1px;height:20px;background:#b5e6b5;"></div>
<div style="left:1305px;top:160px;width:1px;height:20px;background:#dedede;"></div>
<div style="left:1409px;top:160px;width:1px;height:20px;background:#dedede;"></div>
<div style="left:1667px;top:160px;width:1px;height:20px;background:#dedede;"></div>
<div style="left:1722px;top:160px;width:1px;height:20px;background:#dedede;"></div>
<div style="left:1782px;top:160px;width:1px;height:20px;background:#dedede;"></div>
<div style="left:1807px;top:160px;width:1px;height:20px;background:#dedede;"></div>
<div style="left:0px;top:179px;width:631px;height:1px;background:#e2e2e2;"></div>
<div style="left:631px;top:179px;width:570px;height:1px;background:#b3e3b3;"></div>
<div style="left:1201px;top:179px;width:466px;height:1px;background:#e2dfc6;"></div>
<div style="left:1409px;top:179px;width:258px;height:1px;background:#e2dfc6;"></div>
<div style="left:1782px;top:179px;width:25px;height:1px;background:#e2e2e2;"></div>
<div class="t" style="top:159.84px;font-size:12px;line-height:16px;color:#1a1a1a;letter-spacing:1.344px;left:300.34px;width:1000px;text-align:right;">0,00</div>
<div class="t" style="top:159.84px;font-size:12px;line-height:16px;color:#1a1a1a;letter-spacing:1.344px;left:404.34px;width:1000px;text-align:right;">0,00</div>
<div style="left:1410px;top:160px;width:257px;height:20px;overflow:hidden;">
<div class="t" style="top:-0.16px;font-size:12px;line-height:16px;color:#1a1a1a;letter-spacing:1.1px;left:2px;">Cod. Disp.: 011903130uthhu Suppbon.Eu</div>
</div>
<div style="left:1784px;top:161px;width:21px;height:17px;background:#e3e3e3;border:1px solid #c2c2c2;"></div>
<svg style="left:1789px;top:165px" width="10" height="11"><path d="M1 0.5L8.5 9.5M8.5 0.5L1 9.5" stroke="#e24a4a" stroke-width="1.2"/></svg>
<div style="left:19px;top:180px;width:1788px;height:20px;background:#fcd7b6;"></div>
<div style="left:53px;top:180px;width:1px;height:20px;background:#f2cdae;"></div>
<div style="left:262px;top:180px;width:1px;height:20px;background:#f2cdae;"></div>
<div style="left:471px;top:180px;width:1px;height:20px;background:#f2cdae;"></div>
<div style="left:570px;top:180px;width:1px;height:20px;background:#f2cdae;"></div>
<div style="left:631px;top:180px;width:1px;height:20px;background:#f2cdae;"></div>
<div style="left:753px;top:180px;width:1px;height:20px;background:#f2cdae;"></div>
<div style="left:943px;top:180px;width:1px;height:20px;background:#f2cdae;"></div>
<div style="left:1201px;top:180px;width:1px;height:20px;background:#f2cdae;"></div>
<div style="left:1305px;top:180px;width:1px;height:20px;background:#f2cdae;"></div>
<div style="left:1409px;top:180px;width:1px;height:20px;background:#f2cdae;"></div>
<div style="left:1667px;top:180px;width:1px;height:20px;background:#f2cdae;"></div>
<div style="left:1722px;top:180px;width:1px;height:20px;background:#f2cdae;"></div>
<div style="left:1782px;top:180px;width:1px;height:20px;background:#f2cdae;"></div>
<div style="left:1807px;top:180px;width:1px;height:20px;background:#f2cdae;"></div>
<div style="left:19px;top:198px;width:1788px;height:2px;background:#555555;"></div>
<div class="t" style="top:179.84px;font-size:12px;line-height:16px;color:#111;font-weight:bold;-webkit-text-stroke:0.45px currentColor;font-style:italic;letter-spacing:1.177px;left:197.18px;width:1000px;text-align:right;">TOTALE</div>
<div class="t" style="top:179.84px;font-size:12px;line-height:16px;color:#111;font-weight:bold;-webkit-text-stroke:0.45px currentColor;letter-spacing:2.165px;left:301.17px;width:1000px;text-align:right;">6.314,00</div>
<div class="t" style="top:179.84px;font-size:12px;line-height:16px;color:#111;font-weight:bold;-webkit-text-stroke:0.45px currentColor;letter-spacing:2.165px;left:405.17px;width:1000px;text-align:right;">6.314,00</div>
<div style="left:631px;top:200px;width:570px;height:20px;background:#fff;"></div>
<div style="left:1201px;top:200px;width:208px;height:20px;background:#fff;"></div>
<div style="left:1409px;top:200px;width:258px;height:20px;background:#fffde6;"></div>
<div style="left:19px;top:200px;width:1px;height:20px;background:#dedede;"></div>
<div style="left:53px;top:200px;width:1px;height:20px;background:#dedede;"></div>
<div style="left:262px;top:200px;width:1px;height:20px;background:#dedede;"></div>
<div style="left:471px;top:200px;width:1px;height:20px;background:#dedede;"></div>
<div style="left:570px;top:200px;width:1px;height:20px;background:#dedede;"></div>
<div style="left:631px;top:200px;width:1px;height:20px;background:#dedede;"></div>
<div style="left:753px;top:200px;width:1px;height:20px;background:#dedede;"></div>
<div style="left:943px;top:200px;width:1px;height:20px;background:#dedede;"></div>
<div style="left:1201px;top:200px;width:1px;height:20px;background:#dedede;"></div>
<div style="left:1305px;top:200px;width:1px;height:20px;background:#dedede;"></div>
<div style="left:1409px;top:200px;width:1px;height:20px;background:#dedede;"></div>
<div style="left:1667px;top:200px;width:1px;height:20px;background:#dedede;"></div>
<div style="left:1722px;top:200px;width:1px;height:20px;background:#dedede;"></div>
<div style="left:1782px;top:200px;width:1px;height:20px;background:#dedede;"></div>
<div style="left:1807px;top:200px;width:1px;height:20px;background:#dedede;"></div>
<div style="left:0px;top:219px;width:631px;height:1px;background:#e2e2e2;"></div>
<div style="left:631px;top:219px;width:570px;height:1px;background:#e2e2e2;"></div>
<div style="left:1201px;top:219px;width:466px;height:1px;background:#e2e2e2;"></div>
<div style="left:1409px;top:219px;width:258px;height:1px;background:#e2dfc6;"></div>
<div style="left:1782px;top:219px;width:25px;height:1px;background:#e2e2e2;"></div>
<div class="t" style="top:199.84px;font-size:12px;line-height:16px;color:#1a1a1a;letter-spacing:1.344px;left:300.34px;width:1000px;text-align:right;">0,00</div>
<div class="t" style="top:199.84px;font-size:12px;line-height:16px;color:#1a1a1a;letter-spacing:1.152px;left:404.15px;width:1000px;text-align:right;">2.000,00</div>
<div style="left:631px;top:220px;width:570px;height:20px;background:#c1f9c1;"></div>
<div style="left:1201px;top:220px;width:208px;height:20px;background:#fffde6;"></div>
<div style="left:1409px;top:220px;width:258px;height:20px;background:#fffde6;"></div>
<div style="left:19px;top:220px;width:1px;height:20px;background:#dedede;"></div>
<div style="left:53px;top:220px;width:1px;height:20px;background:#dedede;"></div>
<div style="left:262px;top:220px;width:1px;height:20px;background:#dedede;"></div>
<div style="left:471px;top:220px;width:1px;height:20px;background:#dedede;"></div>
<div style="left:570px;top:220px;width:1px;height:20px;background:#dedede;"></div>
<div style="left:631px;top:220px;width:1px;height:20px;background:#b5e6b5;"></div>
<div style="left:753px;top:220px;width:1px;height:20px;background:#b5e6b5;"></div>
<div style="left:943px;top:220px;width:1px;height:20px;background:#b5e6b5;"></div>
<div style="left:1201px;top:220px;width:1px;height:20px;background:#b5e6b5;"></div>
<div style="left:1305px;top:220px;width:1px;height:20px;background:#dedede;"></div>
<div style="left:1409px;top:220px;width:1px;height:20px;background:#dedede;"></div>
<div style="left:1667px;top:220px;width:1px;height:20px;background:#dedede;"></div>
<div style="left:1722px;top:220px;width:1px;height:20px;background:#dedede;"></div>
<div style="left:1782px;top:220px;width:1px;height:20px;background:#dedede;"></div>
<div style="left:1807px;top:220px;width:1px;height:20px;background:#dedede;"></div>
<div style="left:0px;top:239px;width:631px;height:1px;background:#e2e2e2;"></div>
<div style="left:631px;top:239px;width:570px;height:1px;background:#b3e3b3;"></div>
<div style="left:1201px;top:239px;width:466px;height:1px;background:#e2dfc6;"></div>
<div style="left:1409px;top:239px;width:258px;height:1px;background:#e2dfc6;"></div>
<div style="left:1782px;top:239px;width:25px;height:1px;background:#e2e2e2;"></div>
<div class="t" style="top:219.84px;font-size:12px;line-height:16px;color:#1a1a1a;letter-spacing:1.152px;left:300.15px;width:1000px;text-align:right;">2.000,00</div>
<div class="t" style="top:219.84px;font-size:12px;line-height:16px;color:#1a1a1a;letter-spacing:1.344px;left:404.34px;width:1000px;text-align:right;">0,00</div>
<div style="left:1784px;top:221px;width:21px;height:17px;background:#e3e3e3;border:1px solid #c2c2c2;"></div>
<svg style="left:1789px;top:225px" width="10" height="11"><path d="M1 0.5L8.5 9.5M8.5 0.5L1 9.5" stroke="#e24a4a" stroke-width="1.2"/></svg>
<div style="left:19px;top:240px;width:1788px;height:20px;background:#fcd7b6;"></div>
<div style="left:53px;top:240px;width:1px;height:20px;background:#f2cdae;"></div>
<div style="left:262px;top:240px;width:1px;height:20px;background:#f2cdae;"></div>
<div style="left:471px;top:240px;width:1px;height:20px;background:#f2cdae;"></div>
<div style="left:570px;top:240px;width:1px;height:20px;background:#f2cdae;"></div>
<div style="left:631px;top:240px;width:1px;height:20px;background:#f2cdae;"></div>
<div style="left:753px;top:240px;width:1px;height:20px;background:#f2cdae;"></div>
<div style="left:943px;top:240px;width:1px;height:20px;background:#f2cdae;"></div>
<div style="left:1201px;top:240px;width:1px;height:20px;background:#f2cdae;"></div>
<div style="left:1305px;top:240px;width:1px;height:20px;background:#f2cdae;"></div>
<div style="left:1409px;top:240px;width:1px;height:20px;background:#f2cdae;"></div>
<div style="left:1667px;top:240px;width:1px;height:20px;background:#f2cdae;"></div>
<div style="left:1722px;top:240px;width:1px;height:20px;background:#f2cdae;"></div>
<div style="left:1782px;top:240px;width:1px;height:20px;background:#f2cdae;"></div>
<div style="left:1807px;top:240px;width:1px;height:20px;background:#f2cdae;"></div>
<div style="left:19px;top:258px;width:1788px;height:2px;background:#555555;"></div>
<div class="t" style="top:239.84px;font-size:12px;line-height:16px;color:#111;font-weight:bold;-webkit-text-stroke:0.45px currentColor;font-style:italic;letter-spacing:1.177px;left:197.18px;width:1000px;text-align:right;">TOTALE</div>
<div class="t" style="top:239.84px;font-size:12px;line-height:16px;color:#111;font-weight:bold;-webkit-text-stroke:0.45px currentColor;letter-spacing:2.526px;left:301.53px;width:1000px;text-align:right;">0,00</div>
<div class="t" style="top:239.84px;font-size:12px;line-height:16px;color:#111;font-weight:bold;-webkit-text-stroke:0.45px currentColor;letter-spacing:2.165px;left:405.17px;width:1000px;text-align:right;">2.000,00</div>
<div style="left:631px;top:260px;width:570px;height:20px;background:#fff;"></div>
<div style="left:1201px;top:260px;width:208px;height:20px;background:#fff;"></div>
<div style="left:1409px;top:260px;width:258px;height:20px;background:#fffde6;"></div>
<div style="left:19px;top:260px;width:1px;height:20px;background:#dedede;"></div>
<div style="left:53px;top:260px;width:1px;height:20px;background:#dedede;"></div>
<div style="left:262px;top:260px;width:1px;height:20px;background:#dedede;"></div>
<div style="left:471px;top:260px;width:1px;height:20px;background:#dedede;"></div>
<div style="left:570px;top:260px;width:1px;height:20px;background:#dedede;"></div>
<div style="left:631px;top:260px;width:1px;height:20px;background:#dedede;"></div>
<div style="left:753px;top:260px;width:1px;height:20px;background:#dedede;"></div>
<div style="left:943px;top:260px;width:1px;height:20px;background:#dedede;"></div>
<div style="left:1201px;top:260px;width:1px;height:20px;background:#dedede;"></div>
<div style="left:1305px;top:260px;width:1px;height:20px;background:#dedede;"></div>
<div style="left:1409px;top:260px;width:1px;height:20px;background:#dedede;"></div>
<div style="left:1667px;top:260px;width:1px;height:20px;background:#dedede;"></div>
<div style="left:1722px;top:260px;width:1px;height:20px;background:#dedede;"></div>
<div style="left:1782px;top:260px;width:1px;height:20px;background:#dedede;"></div>
<div style="left:1807px;top:260px;width:1px;height:20px;background:#dedede;"></div>
<div style="left:0px;top:279px;width:631px;height:1px;background:#e2e2e2;"></div>
<div style="left:631px;top:279px;width:570px;height:1px;background:#e2e2e2;"></div>
<div style="left:1201px;top:279px;width:466px;height:1px;background:#e2e2e2;"></div>
<div style="left:1409px;top:279px;width:258px;height:1px;background:#e2dfc6;"></div>
<div style="left:1782px;top:279px;width:25px;height:1px;background:#e2e2e2;"></div>
<div class="t" style="top:259.84px;font-size:12px;line-height:16px;color:#1a1a1a;letter-spacing:1.344px;left:300.34px;width:1000px;text-align:right;">0,00</div>
<div class="t" style="top:259.84px;font-size:12px;line-height:16px;color:#1a1a1a;letter-spacing:1.344px;left:404.34px;width:1000px;text-align:right;">1,00</div>
<div style="left:631px;top:280px;width:570px;height:20px;background:#c1f9c1;"></div>
<div style="left:1201px;top:280px;width:208px;height:20px;background:#fffde6;"></div>
<div style="left:1409px;top:280px;width:258px;height:20px;background:#fffde6;"></div>
<div style="left:19px;top:280px;width:1px;height:20px;background:#dedede;"></div>
<div style="left:53px;top:280px;width:1px;height:20px;background:#dedede;"></div>
<div style="left:262px;top:280px;width:1px;height:20px;background:#dedede;"></div>
<div style="left:471px;top:280px;width:1px;height:20px;background:#dedede;"></div>
<div style="left:570px;top:280px;width:1px;height:20px;background:#dedede;"></div>
<div style="left:631px;top:280px;width:1px;height:20px;background:#b5e6b5;"></div>
<div style="left:753px;top:280px;width:1px;height:20px;background:#b5e6b5;"></div>
<div style="left:943px;top:280px;width:1px;height:20px;background:#b5e6b5;"></div>
<div style="left:1201px;top:280px;width:1px;height:20px;background:#b5e6b5;"></div>
<div style="left:1305px;top:280px;width:1px;height:20px;background:#dedede;"></div>
<div style="left:1409px;top:280px;width:1px;height:20px;background:#dedede;"></div>
<div style="left:1667px;top:280px;width:1px;height:20px;background:#dedede;"></div>
<div style="left:1722px;top:280px;width:1px;height:20px;background:#dedede;"></div>
<div style="left:1782px;top:280px;width:1px;height:20px;background:#dedede;"></div>
<div style="left:1807px;top:280px;width:1px;height:20px;background:#dedede;"></div>
<div style="left:0px;top:299px;width:631px;height:1px;background:#e2e2e2;"></div>
<div style="left:631px;top:299px;width:570px;height:1px;background:#b3e3b3;"></div>
<div style="left:1201px;top:299px;width:466px;height:1px;background:#e2dfc6;"></div>
<div style="left:1409px;top:299px;width:258px;height:1px;background:#e2dfc6;"></div>
<div style="left:1782px;top:299px;width:25px;height:1px;background:#e2e2e2;"></div>
<div class="t" style="top:279.84px;font-size:12px;line-height:16px;color:#1a1a1a;letter-spacing:1.344px;left:300.34px;width:1000px;text-align:right;">1,00</div>
<div class="t" style="top:279.84px;font-size:12px;line-height:16px;color:#1a1a1a;letter-spacing:1.344px;left:404.34px;width:1000px;text-align:right;">0,00</div>
<div style="left:1784px;top:281px;width:21px;height:17px;background:#e3e3e3;border:1px solid #c2c2c2;"></div>
<svg style="left:1789px;top:285px" width="10" height="11"><path d="M1 0.5L8.5 9.5M8.5 0.5L1 9.5" stroke="#e24a4a" stroke-width="1.2"/></svg>
<div style="left:19px;top:300px;width:1788px;height:20px;background:#fcd7b6;"></div>
<div style="left:53px;top:300px;width:1px;height:20px;background:#f2cdae;"></div>
<div style="left:262px;top:300px;width:1px;height:20px;background:#f2cdae;"></div>
<div style="left:471px;top:300px;width:1px;height:20px;background:#f2cdae;"></div>
<div style="left:570px;top:300px;width:1px;height:20px;background:#f2cdae;"></div>
<div style="left:631px;top:300px;width:1px;height:20px;background:#f2cdae;"></div>
<div style="left:753px;top:300px;width:1px;height:20px;background:#f2cdae;"></div>
<div style="left:943px;top:300px;width:1px;height:20px;background:#f2cdae;"></div>
<div style="left:1201px;top:300px;width:1px;height:20px;background:#f2cdae;"></div>
<div style="left:1305px;top:300px;width:1px;height:20px;background:#f2cdae;"></div>
<div style="left:1409px;top:300px;width:1px;height:20px;background:#f2cdae;"></div>
<div style="left:1667px;top:300px;width:1px;height:20px;background:#f2cdae;"></div>
<div style="left:1722px;top:300px;width:1px;height:20px;background:#f2cdae;"></div>
<div style="left:1782px;top:300px;width:1px;height:20px;background:#f2cdae;"></div>
<div style="left:1807px;top:300px;width:1px;height:20px;background:#f2cdae;"></div>
<div style="left:19px;top:318px;width:1788px;height:2px;background:#555555;"></div>
<div class="t" style="top:299.84px;font-size:12px;line-height:16px;color:#111;font-weight:bold;-webkit-text-stroke:0.45px currentColor;font-style:italic;letter-spacing:1.177px;left:197.18px;width:1000px;text-align:right;">TOTALE</div>
<div class="t" style="top:299.84px;font-size:12px;line-height:16px;color:#111;font-weight:bold;-webkit-text-stroke:0.45px currentColor;letter-spacing:2.526px;left:301.53px;width:1000px;text-align:right;">0,00</div>
<div class="t" style="top:299.84px;font-size:12px;line-height:16px;color:#111;font-weight:bold;-webkit-text-stroke:0.45px currentColor;letter-spacing:2.526px;left:405.53px;width:1000px;text-align:right;">1,00</div>
<div style="left:631px;top:320px;width:570px;height:20px;background:#fff;"></div>
<div style="left:1201px;top:320px;width:208px;height:20px;background:#fff;"></div>
<div style="left:1409px;top:320px;width:258px;height:20px;background:#fffde6;"></div>
<div style="left:19px;top:320px;width:1px;height:20px;background:#dedede;"></div>
<div style="left:53px;top:320px;width:1px;height:20px;background:#dedede;"></div>
<div style="left:262px;top:320px;width:1px;height:20px;background:#dedede;"></div>
<div style="left:471px;top:320px;width:1px;height:20px;background:#dedede;"></div>
<div style="left:570px;top:320px;width:1px;height:20px;background:#dedede;"></div>
<div style="left:631px;top:320px;width:1px;height:20px;background:#dedede;"></div>
<div style="left:753px;top:320px;width:1px;height:20px;background:#dedede;"></div>
<div style="left:943px;top:320px;width:1px;height:20px;background:#dedede;"></div>
<div style="left:1201px;top:320px;width:1px;height:20px;background:#dedede;"></div>
<div style="left:1305px;top:320px;width:1px;height:20px;background:#dedede;"></div>
<div style="left:1409px;top:320px;width:1px;height:20px;background:#dedede;"></div>
<div style="left:1667px;top:320px;width:1px;height:20px;background:#dedede;"></div>
<div style="left:1722px;top:320px;width:1px;height:20px;background:#dedede;"></div>
<div style="left:1782px;top:320px;width:1px;height:20px;background:#dedede;"></div>
<div style="left:1807px;top:320px;width:1px;height:20px;background:#dedede;"></div>
<div style="left:0px;top:339px;width:631px;height:1px;background:#e2e2e2;"></div>
<div style="left:631px;top:339px;width:570px;height:1px;background:#e2e2e2;"></div>
<div style="left:1201px;top:339px;width:466px;height:1px;background:#e2e2e2;"></div>
<div style="left:1409px;top:339px;width:258px;height:1px;background:#e2dfc6;"></div>
<div style="left:1782px;top:339px;width:25px;height:1px;background:#e2e2e2;"></div>
<div class="t" style="top:319.84px;font-size:12px;line-height:16px;color:#1a1a1a;letter-spacing:1.344px;left:300.34px;width:1000px;text-align:right;">0,00</div>
<div class="t" style="top:319.84px;font-size:12px;line-height:16px;color:#1a1a1a;letter-spacing:1.344px;left:404.34px;width:1000px;text-align:right;">6,20</div>
<div style="left:1410px;top:320px;width:257px;height:20px;overflow:hidden;">
<div class="t" style="top:-0.16px;font-size:12px;line-height:16px;color:#1a1a1a;letter-spacing:0.943px;left:2px;">Canone Mensile Base E Servizi Aggiuntivi</div>
</div>
<div style="left:631px;top:340px;width:570px;height:20px;background:#efefef;"></div>
<div style="left:1201px;top:340px;width:208px;height:20px;background:#fffde6;"></div>
<div style="left:1409px;top:340px;width:258px;height:20px;background:#fffde6;"></div>
<div style="left:19px;top:340px;width:1px;height:20px;background:#dedede;"></div>
<div style="left:53px;top:340px;width:1px;height:20px;background:#dedede;"></div>
<div style="left:262px;top:340px;width:1px;height:20px;background:#dedede;"></div>
<div style="left:471px;top:340px;width:1px;height:20px;background:#dedede;"></div>
<div style="left:570px;top:340px;width:1px;height:20px;background:#dedede;"></div>
<div style="left:631px;top:340px;width:1px;height:20px;background:#dedede;"></div>
<div style="left:753px;top:340px;width:1px;height:20px;background:#dedede;"></div>
<div style="left:943px;top:340px;width:1px;height:20px;background:#dedede;"></div>
<div style="left:1201px;top:340px;width:1px;height:20px;background:#dedede;"></div>
<div style="left:1305px;top:340px;width:1px;height:20px;background:#dedede;"></div>
<div style="left:1409px;top:340px;width:1px;height:20px;background:#dedede;"></div>
<div style="left:1667px;top:340px;width:1px;height:20px;background:#dedede;"></div>
<div style="left:1722px;top:340px;width:1px;height:20px;background:#dedede;"></div>
<div style="left:1782px;top:340px;width:1px;height:20px;background:#dedede;"></div>
<div style="left:1807px;top:340px;width:1px;height:20px;background:#dedede;"></div>
<div style="left:0px;top:359px;width:631px;height:1px;background:#e2e2e2;"></div>
<div style="left:631px;top:359px;width:570px;height:1px;background:#e2e2e2;"></div>
<div style="left:1201px;top:359px;width:466px;height:1px;background:#e2dfc6;"></div>
<div style="left:1409px;top:359px;width:258px;height:1px;background:#e2dfc6;"></div>
<div style="left:1782px;top:359px;width:25px;height:1px;background:#e2e2e2;"></div>
<div class="t" style="top:339.84px;font-size:12px;line-height:16px;color:#1a1a1a;letter-spacing:1.344px;left:300.34px;width:1000px;text-align:right;">6,20</div>
<div class="t" style="top:339.84px;font-size:12px;line-height:16px;color:#1a1a1a;letter-spacing:1.344px;left:404.34px;width:1000px;text-align:right;">0,00</div>
<div style="left:1410px;top:340px;width:257px;height:20px;overflow:hidden;">
<div class="t" style="top:-0.16px;font-size:12px;line-height:16px;color:#1a1a1a;letter-spacing:0.943px;left:2px;">Canone Mensile Base E Servizi Aggiuntivi</div>
</div>
<div style="left:1784px;top:341px;width:21px;height:17px;background:#e3e3e3;border:1px solid #c2c2c2;"></div>
<svg style="left:1789px;top:345px" width="10" height="11"><path d="M1 0.5L8.5 9.5M8.5 0.5L1 9.5" stroke="#e24a4a" stroke-width="1.2"/></svg>
<div style="left:631px;top:360px;width:570px;height:20px;background:#c1f9c1;"></div>
<div style="left:1201px;top:360px;width:208px;height:20px;background:#fffde6;"></div>
<div style="left:1409px;top:360px;width:258px;height:20px;background:#fffde6;"></div>
<div style="left:19px;top:360px;width:1px;height:20px;background:#dedede;"></div>
<div style="left:53px;top:360px;width:1px;height:20px;background:#dedede;"></div>
<div style="left:262px;top:360px;width:1px;height:20px;background:#dedede;"></div>
<div style="left:471px;top:360px;width:1px;height:20px;background:#dedede;"></div>
<div style="left:570px;top:360px;width:1px;height:20px;background:#dedede;"></div>
<div style="left:631px;top:360px;width:1px;height:20px;background:#b5e6b5;"></div>
<div style="left:753px;top:360px;width:1px;height:20px;background:#b5e6b5;"></div>
<div style="left:943px;top:360px;width:1px;height:20px;background:#b5e6b5;"></div>
<div style="left:1201px;top:360px;width:1px;height:20px;background:#b5e6b5;"></div>
<div style="left:1305px;top:360px;width:1px;height:20px;background:#dedede;"></div>
<div style="left:1409px;top:360px;width:1px;height:20px;background:#dedede;"></div>
<div style="left:1667px;top:360px;width:1px;height:20px;background:#dedede;"></div>
<div style="left:1722px;top:360px;width:1px;height:20px;background:#dedede;"></div>
<div style="left:1782px;top:360px;width:1px;height:20px;background:#dedede;"></div>
<div style="left:1807px;top:360px;width:1px;height:20px;background:#dedede;"></div>
<div style="left:0px;top:379px;width:631px;height:1px;background:#e2e2e2;"></div>
<div style="left:631px;top:379px;width:570px;height:1px;background:#b3e3b3;"></div>
<div style="left:1201px;top:379px;width:466px;height:1px;background:#e2dfc6;"></div>
<div style="left:1409px;top:379px;width:258px;height:1px;background:#e2dfc6;"></div>
<div style="left:1782px;top:379px;width:25px;height:1px;background:#e2e2e2;"></div>
<div class="t" style="top:359.84px;font-size:12px;line-height:16px;color:#1a1a1a;letter-spacing:1.344px;left:300.34px;width:1000px;text-align:right;">0,00</div>
<div class="t" style="top:359.84px;font-size:12px;line-height:16px;color:#1a1a1a;letter-spacing:1.344px;left:404.34px;width:1000px;text-align:right;">0,00</div>
<div style="left:1410px;top:360px;width:257px;height:20px;overflow:hidden;">
<div class="t" style="top:-0.16px;font-size:12px;line-height:16px;color:#1a1a1a;letter-spacing:0.943px;left:2px;">Canone Mensile Base E Servizi Aggiuntivi</div>
</div>
<div style="left:1784px;top:361px;width:21px;height:17px;background:#e3e3e3;border:1px solid #c2c2c2;"></div>
<svg style="left:1789px;top:365px" width="10" height="11"><path d="M1 0.5L8.5 9.5M8.5 0.5L1 9.5" stroke="#e24a4a" stroke-width="1.2"/></svg>
<div style="left:19px;top:380px;width:1788px;height:20px;background:#fcd7b6;"></div>
<div style="left:53px;top:380px;width:1px;height:20px;background:#f2cdae;"></div>
<div style="left:262px;top:380px;width:1px;height:20px;background:#f2cdae;"></div>
<div style="left:471px;top:380px;width:1px;height:20px;background:#f2cdae;"></div>
<div style="left:570px;top:380px;width:1px;height:20px;background:#f2cdae;"></div>
<div style="left:631px;top:380px;width:1px;height:20px;background:#f2cdae;"></div>
<div style="left:753px;top:380px;width:1px;height:20px;background:#f2cdae;"></div>
<div style="left:943px;top:380px;width:1px;height:20px;background:#f2cdae;"></div>
<div style="left:1201px;top:380px;width:1px;height:20px;background:#f2cdae;"></div>
<div style="left:1305px;top:380px;width:1px;height:20px;background:#f2cdae;"></div>
<div style="left:1409px;top:380px;width:1px;height:20px;background:#f2cdae;"></div>
<div style="left:1667px;top:380px;width:1px;height:20px;background:#f2cdae;"></div>
<div style="left:1722px;top:380px;width:1px;height:20px;background:#f2cdae;"></div>
<div style="left:1782px;top:380px;width:1px;height:20px;background:#f2cdae;"></div>
<div style="left:1807px;top:380px;width:1px;height:20px;background:#f2cdae;"></div>
<div style="left:19px;top:398px;width:1788px;height:2px;background:#555555;"></div>
<div class="t" style="top:379.84px;font-size:12px;line-height:16px;color:#111;font-weight:bold;-webkit-text-stroke:0.45px currentColor;font-style:italic;letter-spacing:1.177px;left:197.18px;width:1000px;text-align:right;">TOTALE</div>
<div class="t" style="top:379.84px;font-size:12px;line-height:16px;color:#111;font-weight:bold;-webkit-text-stroke:0.45px currentColor;letter-spacing:2.526px;left:301.53px;width:1000px;text-align:right;">6,20</div>
<div class="t" style="top:379.84px;font-size:12px;line-height:16px;color:#111;font-weight:bold;-webkit-text-stroke:0.45px currentColor;letter-spacing:2.526px;left:405.53px;width:1000px;text-align:right;">6,20</div>
<div style="left:631px;top:400px;width:570px;height:20px;background:#fff;"></div>
<div style="left:1201px;top:400px;width:208px;height:20px;background:#fff;"></div>
<div style="left:1409px;top:400px;width:258px;height:20px;background:#fffde6;"></div>
<div style="left:19px;top:400px;width:1px;height:20px;background:#dedede;"></div>
<div style="left:53px;top:400px;width:1px;height:20px;background:#dedede;"></div>
<div style="left:262px;top:400px;width:1px;height:20px;background:#dedede;"></div>
<div style="left:471px;top:400px;width:1px;height:20px;background:#dedede;"></div>
<div style="left:570px;top:400px;width:1px;height:20px;background:#dedede;"></div>
<div style="left:631px;top:400px;width:1px;height:20px;background:#dedede;"></div>
<div style="left:753px;top:400px;width:1px;height:20px;background:#dedede;"></div>
<div style="left:943px;top:400px;width:1px;height:20px;background:#dedede;"></div>
<div style="left:1201px;top:400px;width:1px;height:20px;background:#dedede;"></div>
<div style="left:1305px;top:400px;width:1px;height:20px;background:#dedede;"></div>
<div style="left:1409px;top:400px;width:1px;height:20px;background:#dedede;"></div>
<div style="left:1667px;top:400px;width:1px;height:20px;background:#dedede;"></div>
<div style="left:1722px;top:400px;width:1px;height:20px;background:#dedede;"></div>
<div style="left:1782px;top:400px;width:1px;height:20px;background:#dedede;"></div>
<div style="left:1807px;top:400px;width:1px;height:20px;background:#dedede;"></div>
<div style="left:0px;top:419px;width:631px;height:1px;background:#e2e2e2;"></div>
<div style="left:631px;top:419px;width:570px;height:1px;background:#e2e2e2;"></div>
<div style="left:1201px;top:419px;width:466px;height:1px;background:#e2e2e2;"></div>
<div style="left:1409px;top:419px;width:258px;height:1px;background:#e2dfc6;"></div>
<div style="left:1782px;top:419px;width:25px;height:1px;background:#e2e2e2;"></div>
<div class="t" style="top:399.84px;font-size:12px;line-height:16px;color:#1a1a1a;letter-spacing:1.344px;left:300.34px;width:1000px;text-align:right;">0,00</div>
<div class="t" style="top:399.84px;font-size:12px;line-height:16px;color:#1a1a1a;letter-spacing:1.267px;left:404.27px;width:1000px;text-align:right;">78,01</div>
<div style="left:1410px;top:400px;width:257px;height:20px;overflow:hidden;">
<div class="t" style="top:-0.16px;font-size:12px;line-height:16px;color:#1a1a1a;letter-spacing:1.188px;left:2px;">Effettuato Il 28/03/2019 Alle Ore 06:37m</div>
</div>
<div style="left:631px;top:420px;width:570px;height:20px;background:#c1f9c1;"></div>
<div style="left:1201px;top:420px;width:208px;height:20px;background:#fffde6;"></div>
<div style="left:1409px;top:420px;width:258px;height:20px;background:#fffde6;"></div>
<div style="left:19px;top:420px;width:1px;height:20px;background:#dedede;"></div>
<div style="left:53px;top:420px;width:1px;height:20px;background:#dedede;"></div>
<div style="left:262px;top:420px;width:1px;height:20px;background:#dedede;"></div>
<div style="left:471px;top:420px;width:1px;height:20px;background:#dedede;"></div>
<div style="left:570px;top:420px;width:1px;height:20px;background:#dedede;"></div>
<div style="left:631px;top:420px;width:1px;height:20px;background:#b5e6b5;"></div>
<div style="left:753px;top:420px;width:1px;height:20px;background:#b5e6b5;"></div>
<div style="left:943px;top:420px;width:1px;height:20px;background:#b5e6b5;"></div>
<div style="left:1201px;top:420px;width:1px;height:20px;background:#b5e6b5;"></div>
<div style="left:1305px;top:420px;width:1px;height:20px;background:#dedede;"></div>
<div style="left:1409px;top:420px;width:1px;height:20px;background:#dedede;"></div>
<div style="left:1667px;top:420px;width:1px;height:20px;background:#dedede;"></div>
<div style="left:1722px;top:420px;width:1px;height:20px;background:#dedede;"></div>
<div style="left:1782px;top:420px;width:1px;height:20px;background:#dedede;"></div>
<div style="left:1807px;top:420px;width:1px;height:20px;background:#dedede;"></div>
<div style="left:0px;top:439px;width:631px;height:1px;background:#e2e2e2;"></div>
<div style="left:631px;top:439px;width:570px;height:1px;background:#b3e3b3;"></div>
<div style="left:1201px;top:439px;width:466px;height:1px;background:#e2dfc6;"></div>
<div style="left:1409px;top:439px;width:258px;height:1px;background:#e2dfc6;"></div>
<div style="left:1782px;top:439px;width:25px;height:1px;background:#e2e2e2;"></div>
<div class="t" style="top:419.84px;font-size:12px;line-height:16px;color:#1a1a1a;letter-spacing:1.267px;left:300.27px;width:1000px;text-align:right;">78,01</div>
<div class="t" style="top:419.84px;font-size:12px;line-height:16px;color:#1a1a1a;letter-spacing:1.344px;left:404.34px;width:1000px;text-align:right;">0,00</div>
<div style="left:1410px;top:420px;width:257px;height:20px;overflow:hidden;">
<div class="t" style="top:-0.16px;font-size:12px;line-height:16px;color:#1a1a1a;letter-spacing:1.188px;left:2px;">Effettuato Il 28/03/2019 Alle Ore 06:37m</div>
</div>
<div style="left:1784px;top:421px;width:21px;height:17px;background:#e3e3e3;border:1px solid #c2c2c2;"></div>
<svg style="left:1789px;top:425px" width="10" height="11"><path d="M1 0.5L8.5 9.5M8.5 0.5L1 9.5" stroke="#e24a4a" stroke-width="1.2"/></svg>
<div style="left:19px;top:440px;width:1788px;height:20px;background:#fcd7b6;"></div>
<div style="left:53px;top:440px;width:1px;height:20px;background:#f2cdae;"></div>
<div style="left:262px;top:440px;width:1px;height:20px;background:#f2cdae;"></div>
<div style="left:471px;top:440px;width:1px;height:20px;background:#f2cdae;"></div>
<div style="left:570px;top:440px;width:1px;height:20px;background:#f2cdae;"></div>
<div style="left:631px;top:440px;width:1px;height:20px;background:#f2cdae;"></div>
<div style="left:753px;top:440px;width:1px;height:20px;background:#f2cdae;"></div>
<div style="left:943px;top:440px;width:1px;height:20px;background:#f2cdae;"></div>
<div style="left:1201px;top:440px;width:1px;height:20px;background:#f2cdae;"></div>
<div style="left:1305px;top:440px;width:1px;height:20px;background:#f2cdae;"></div>
<div style="left:1409px;top:440px;width:1px;height:20px;background:#f2cdae;"></div>
<div style="left:1667px;top:440px;width:1px;height:20px;background:#f2cdae;"></div>
<div style="left:1722px;top:440px;width:1px;height:20px;background:#f2cdae;"></div>
<div style="left:1782px;top:440px;width:1px;height:20px;background:#f2cdae;"></div>
<div style="left:1807px;top:440px;width:1px;height:20px;background:#f2cdae;"></div>
<div style="left:19px;top:458px;width:1788px;height:2px;background:#555555;"></div>
<div class="t" style="top:439.84px;font-size:12px;line-height:16px;color:#111;font-weight:bold;-webkit-text-stroke:0.45px currentColor;font-style:italic;letter-spacing:1.177px;left:197.18px;width:1000px;text-align:right;">TOTALE</div>
<div class="t" style="top:439.84px;font-size:12px;line-height:16px;color:#111;font-weight:bold;-webkit-text-stroke:0.45px currentColor;letter-spacing:2.526px;left:301.53px;width:1000px;text-align:right;">0,00</div>
<div class="t" style="top:439.84px;font-size:12px;line-height:16px;color:#111;font-weight:bold;-webkit-text-stroke:0.45px currentColor;letter-spacing:2.434px;left:405.43px;width:1000px;text-align:right;">78,01</div>
<div style="left:631px;top:460px;width:570px;height:20px;background:#fff;"></div>
<div style="left:1201px;top:460px;width:208px;height:20px;background:#fff;"></div>
<div style="left:1409px;top:460px;width:258px;height:20px;background:#fffde6;"></div>
<div style="left:19px;top:460px;width:1px;height:20px;background:#dedede;"></div>
<div style="left:53px;top:460px;width:1px;height:20px;background:#dedede;"></div>
<div style="left:262px;top:460px;width:1px;height:20px;background:#dedede;"></div>
<div style="left:471px;top:460px;width:1px;height:20px;background:#dedede;"></div>
<div style="left:570px;top:460px;width:1px;height:20px;background:#dedede;"></div>
<div style="left:631px;top:460px;width:1px;height:20px;background:#dedede;"></div>
<div style="left:753px;top:460px;width:1px;height:20px;background:#dedede;"></div>
<div style="left:943px;top:460px;width:1px;height:20px;background:#dedede;"></div>
<div style="left:1201px;top:460px;width:1px;height:20px;background:#dedede;"></div>
<div style="left:1305px;top:460px;width:1px;height:20px;background:#dedede;"></div>
<div style="left:1409px;top:460px;width:1px;height:20px;background:#dedede;"></div>
<div style="left:1667px;top:460px;width:1px;height:20px;background:#dedede;"></div>
<div style="left:1722px;top:460px;width:1px;height:20px;background:#dedede;"></div>
<div style="left:1782px;top:460px;width:1px;height:20px;background:#dedede;"></div>
<div style="left:1807px;top:460px;width:1px;height:20px;background:#dedede;"></div>
<div style="left:0px;top:479px;width:631px;height:1px;background:#e2e2e2;"></div>
<div style="left:631px;top:479px;width:570px;height:1px;background:#e2e2e2;"></div>
<div style="left:1201px;top:479px;width:466px;height:1px;background:#e2e2e2;"></div>
<div style="left:1409px;top:479px;width:258px;height:1px;background:#e2dfc6;"></div>
<div style="left:1782px;top:479px;width:25px;height:1px;background:#e2e2e2;"></div>
<div class="t" style="top:459.84px;font-size:12px;line-height:16px;color:#1a1a1a;letter-spacing:1.344px;left:300.34px;width:1000px;text-align:right;">0,00</div>
<div class="t" style="top:459.84px;font-size:12px;line-height:16px;color:#1a1a1a;letter-spacing:1.267px;left:404.27px;width:1000px;text-align:right;">24,70</div>
<div style="left:1410px;top:460px;width:257px;height:20px;overflow:hidden;">
<div class="t" style="top:-0.16px;font-size:12px;line-height:16px;color:#1a1a1a;letter-spacing:0.981px;left:2px;">Imposta Di Bollo E/C E Rendiconto</div>
</div>
<div style="left:631px;top:480px;width:570px;height:20px;background:#efefef;"></div>
<div style="left:1201px;top:480px;width:208px;height:20px;background:#fffde6;"></div>
<div style="left:1409px;top:480px;width:258px;height:20px;background:#fffde6;"></div>
<div style="left:19px;top:480px;width:1px;height:20px;background:#dedede;"></div>
<div style="left:53px;top:480px;width:1px;height:20px;background:#dedede;"></div>
<div style="left:262px;top:480px;width:1px;height:20px;background:#dedede;"></div>
<div style="left:471px;top:480px;width:1px;height:20px;background:#dedede;"></div>
<div style="left:570px;top:480px;width:1px;height:20px;background:#dedede;"></div>
<div style="left:631px;top:480px;width:1px;height:20px;background:#dedede;"></div>
<div style="left:753px;top:480px;width:1px;height:20px;background:#dedede;"></div>
<div style="left:943px;top:480px;width:1px;height:20px;background:#dedede;"></div>
<div style="left:1201px;top:480px;width:1px;height:20px;background:#dedede;"></div>
<div style="left:1305px;top:480px;width:1px;height:20px;background:#dedede;"></div>
<div style="left:1409px;top:480px;width:1px;height:20px;background:#dedede;"></div>
<div style="left:1667px;top:480px;width:1px;height:20px;background:#dedede;"></div>
<div style="left:1722px;top:480px;width:1px;height:20px;background:#dedede;"></div>
<div style="left:1782px;top:480px;width:1px;height:20px;background:#dedede;"></div>
<div style="left:1807px;top:480px;width:1px;height:20px;background:#dedede;"></div>
<div style="left:0px;top:499px;width:631px;height:1px;background:#e2e2e2;"></div>
<div style="left:631px;top:499px;width:570px;height:1px;background:#e2e2e2;"></div>
<div style="left:1201px;top:499px;width:466px;height:1px;background:#e2dfc6;"></div>
<div style="left:1409px;top:499px;width:258px;height:1px;background:#e2dfc6;"></div>
<div style="left:1782px;top:499px;width:25px;height:1px;background:#e2e2e2;"></div>
<div class="t" style="top:479.84px;font-size:12px;line-height:16px;color:#1a1a1a;letter-spacing:1.267px;left:300.27px;width:1000px;text-align:right;">24,70</div>
<div class="t" style="top:479.84px;font-size:12px;line-height:16px;color:#1a1a1a;letter-spacing:1.344px;left:404.34px;width:1000px;text-align:right;">0,00</div>
<div style="left:1410px;top:480px;width:257px;height:20px;overflow:hidden;">
<div class="t" style="top:-0.16px;font-size:12px;line-height:16px;color:#1a1a1a;letter-spacing:0.981px;left:2px;">Imposta Di Bollo E/C E Rendiconto</div>
</div>
<div style="left:1784px;top:481px;width:21px;height:17px;background:#e3e3e3;border:1px solid #c2c2c2;"></div>
<svg style="left:1789px;top:485px" width="10" height="11"><path d="M1 0.5L8.5 9.5M8.5 0.5L1 9.5" stroke="#e24a4a" stroke-width="1.2"/></svg>
<div style="left:631px;top:500px;width:570px;height:20px;background:#c1f9c1;"></div>
<div style="left:1201px;top:500px;width:208px;height:20px;background:#fffde6;"></div>
<div style="left:1409px;top:500px;width:258px;height:20px;background:#fffde6;"></div>
<div style="left:19px;top:500px;width:1px;height:20px;background:#dedede;"></div>
<div style="left:53px;top:500px;width:1px;height:20px;background:#dedede;"></div>
<div style="left:262px;top:500px;width:1px;height:20px;background:#dedede;"></div>
<div style="left:471px;top:500px;width:1px;height:20px;background:#dedede;"></div>
<div style="left:570px;top:500px;width:1px;height:20px;background:#dedede;"></div>
<div style="left:631px;top:500px;width:1px;height:20px;background:#b5e6b5;"></div>
<div style="left:753px;top:500px;width:1px;height:20px;background:#b5e6b5;"></div>
<div style="left:943px;top:500px;width:1px;height:20px;background:#b5e6b5;"></div>
<div style="left:1201px;top:500px;width:1px;height:20px;background:#b5e6b5;"></div>
<div style="left:1305px;top:500px;width:1px;height:20px;background:#dedede;"></div>
<div style="left:1409px;top:500px;width:1px;height:20px;background:#dedede;"></div>
<div style="left:1667px;top:500px;width:1px;height:20px;background:#dedede;"></div>
<div style="left:1722px;top:500px;width:1px;height:20px;background:#dedede;"></div>
<div style="left:1782px;top:500px;width:1px;height:20px;background:#dedede;"></div>
<div style="left:1807px;top:500px;width:1px;height:20px;background:#dedede;"></div>
<div style="left:0px;top:519px;width:631px;height:1px;background:#e2e2e2;"></div>
<div style="left:631px;top:519px;width:570px;height:1px;background:#b3e3b3;"></div>
<div style="left:1201px;top:519px;width:466px;height:1px;background:#e2dfc6;"></div>
<div style="left:1409px;top:519px;width:258px;height:1px;background:#e2dfc6;"></div>
<div style="left:1782px;top:519px;width:25px;height:1px;background:#e2e2e2;"></div>
<div class="t" style="top:499.84px;font-size:12px;line-height:16px;color:#1a1a1a;letter-spacing:1.344px;left:300.34px;width:1000px;text-align:right;">0,00</div>
<div class="t" style="top:499.84px;font-size:12px;line-height:16px;color:#1a1a1a;letter-spacing:1.344px;left:404.34px;width:1000px;text-align:right;">0,00</div>
<div style="left:1410px;top:500px;width:257px;height:20px;overflow:hidden;">
<div class="t" style="top:-0.16px;font-size:12px;line-height:16px;color:#1a1a1a;letter-spacing:0.981px;left:2px;">Imposta Di Bollo E/C E Rendiconto</div>
</div>
<div style="left:1784px;top:501px;width:21px;height:17px;background:#e3e3e3;border:1px solid #c2c2c2;"></div>
<svg style="left:1789px;top:505px" width="10" height="11"><path d="M1 0.5L8.5 9.5M8.5 0.5L1 9.5" stroke="#e24a4a" stroke-width="1.2"/></svg>
<div style="left:19px;top:520px;width:1788px;height:20px;background:#fcd7b6;"></div>
<div style="left:53px;top:520px;width:1px;height:20px;background:#f2cdae;"></div>
<div style="left:262px;top:520px;width:1px;height:20px;background:#f2cdae;"></div>
<div style="left:471px;top:520px;width:1px;height:20px;background:#f2cdae;"></div>
<div style="left:570px;top:520px;width:1px;height:20px;background:#f2cdae;"></div>
<div style="left:631px;top:520px;width:1px;height:20px;background:#f2cdae;"></div>
<div style="left:753px;top:520px;width:1px;height:20px;background:#f2cdae;"></div>
<div style="left:943px;top:520px;width:1px;height:20px;background:#f2cdae;"></div>
<div style="left:1201px;top:520px;width:1px;height:20px;background:#f2cdae;"></div>
<div style="left:1305px;top:520px;width:1px;height:20px;background:#f2cdae;"></div>
<div style="left:1409px;top:520px;width:1px;height:20px;background:#f2cdae;"></div>
<div style="left:1667px;top:520px;width:1px;height:20px;background:#f2cdae;"></div>
<div style="left:1722px;top:520px;width:1px;height:20px;background:#f2cdae;"></div>
<div style="left:1782px;top:520px;width:1px;height:20px;background:#f2cdae;"></div>
<div style="left:1807px;top:520px;width:1px;height:20px;background:#f2cdae;"></div>
<div style="left:19px;top:538px;width:1788px;height:2px;background:#555555;"></div>
<div class="t" style="top:519.84px;font-size:12px;line-height:16px;color:#111;font-weight:bold;-webkit-text-stroke:0.45px currentColor;font-style:italic;letter-spacing:1.177px;left:197.18px;width:1000px;text-align:right;">TOTALE</div>
<div class="t" style="top:519.84px;font-size:12px;line-height:16px;color:#111;font-weight:bold;-webkit-text-stroke:0.45px currentColor;letter-spacing:2.434px;left:301.43px;width:1000px;text-align:right;">24,70</div>
<div class="t" style="top:519.84px;font-size:12px;line-height:16px;color:#111;font-weight:bold;-webkit-text-stroke:0.45px currentColor;letter-spacing:2.434px;left:405.43px;width:1000px;text-align:right;">24,70</div>
<div style="left:631px;top:540px;width:570px;height:20px;background:#fff;"></div>
<div style="left:1201px;top:540px;width:208px;height:20px;background:#fff;"></div>
<div style="left:1409px;top:540px;width:258px;height:20px;background:#fffde6;"></div>
<div style="left:19px;top:540px;width:1px;height:20px;background:#dedede;"></div>
<div style="left:53px;top:540px;width:1px;height:20px;background:#dedede;"></div>
<div style="left:262px;top:540px;width:1px;height:20px;background:#dedede;"></div>
<div style="left:471px;top:540px;width:1px;height:20px;background:#dedede;"></div>
<div style="left:570px;top:540px;width:1px;height:20px;background:#dedede;"></div>
<div style="left:631px;top:540px;width:1px;height:20px;background:#dedede;"></div>
<div style="left:753px;top:540px;width:1px;height:20px;background:#dedede;"></div>
<div style="left:943px;top:540px;width:1px;height:20px;background:#dedede;"></div>
<div style="left:1201px;top:540px;width:1px;height:20px;background:#dedede;"></div>
<div style="left:1305px;top:540px;width:1px;height:20px;background:#dedede;"></div>
<div style="left:1409px;top:540px;width:1px;height:20px;background:#dedede;"></div>
<div style="left:1667px;top:540px;width:1px;height:20px;background:#dedede;"></div>
<div style="left:1722px;top:540px;width:1px;height:20px;background:#dedede;"></div>
<div style="left:1782px;top:540px;width:1px;height:20px;background:#dedede;"></div>
<div style="left:1807px;top:540px;width:1px;height:20px;background:#dedede;"></div>
<div style="left:0px;top:559px;width:631px;height:1px;background:#e2e2e2;"></div>
<div style="left:631px;top:559px;width:570px;height:1px;background:#e2e2e2;"></div>
<div style="left:1201px;top:559px;width:466px;height:1px;background:#e2e2e2;"></div>
<div style="left:1409px;top:559px;width:258px;height:1px;background:#e2dfc6;"></div>
<div style="left:1782px;top:559px;width:25px;height:1px;background:#e2e2e2;"></div>
<div class="t" style="top:539.84px;font-size:12px;line-height:16px;color:#1a1a1a;letter-spacing:1.152px;left:300.15px;width:1000px;text-align:right;">4.317,05</div>
<div class="t" style="top:539.84px;font-size:12px;line-height:16px;color:#1a1a1a;letter-spacing:1.344px;left:404.34px;width:1000px;text-align:right;">0,00</div>
<div style="left:1410px;top:540px;width:257px;height:20px;overflow:hidden;">
<div class="t" style="top:-0.16px;font-size:12px;line-height:16px;color:#1a1a1a;letter-spacing:1.038px;left:2px;">Cod. Disp.: 011904040k4pvr Cashbon.Eu</div>
</div>
<div style="left:631px;top:560px;width:570px;height:20px;background:#c1f9c1;"></div>
<div style="left:1201px;top:560px;width:208px;height:20px;background:#fffde6;"></div>
<div style="left:1409px;top:560px;width:258px;height:20px;background:#fffde6;"></div>
<div style="left:19px;top:560px;width:1px;height:20px;background:#dedede;"></div>
<div style="left:53px;top:560px;width:1px;height:20px;background:#dedede;"></div>
<div style="left:262px;top:560px;width:1px;height:20px;background:#dedede;"></div>
<div style="left:471px;top:560px;width:1px;height:20px;background:#dedede;"></div>
<div style="left:570px;top:560px;width:1px;height:20px;background:#dedede;"></div>
<div style="left:631px;top:560px;width:1px;height:20px;background:#b5e6b5;"></div>
<div style="left:753px;top:560px;width:1px;height:20px;background:#b5e6b5;"></div>
<div style="left:943px;top:560px;width:1px;height:20px;background:#b5e6b5;"></div>
<div style="left:1201px;top:560px;width:1px;height:20px;background:#b5e6b5;"></div>
<div style="left:1305px;top:560px;width:1px;height:20px;background:#dedede;"></div>
<div style="left:1409px;top:560px;width:1px;height:20px;background:#dedede;"></div>
<div style="left:1667px;top:560px;width:1px;height:20px;background:#dedede;"></div>
<div style="left:1722px;top:560px;width:1px;height:20px;background:#dedede;"></div>
<div style="left:1782px;top:560px;width:1px;height:20px;background:#dedede;"></div>
<div style="left:1807px;top:560px;width:1px;height:20px;background:#dedede;"></div>
<div style="left:0px;top:579px;width:631px;height:1px;background:#e2e2e2;"></div>
<div style="left:631px;top:579px;width:570px;height:1px;background:#b3e3b3;"></div>
<div style="left:1201px;top:579px;width:466px;height:1px;background:#e2dfc6;"></div>
<div style="left:1409px;top:579px;width:258px;height:1px;background:#e2dfc6;"></div>
<div style="left:1782px;top:579px;width:25px;height:1px;background:#e2e2e2;"></div>
<div class="t" style="top:559.84px;font-size:12px;line-height:16px;color:#1a1a1a;letter-spacing:1.344px;left:300.34px;width:1000px;text-align:right;">0,00</div>
<div class="t" style="top:559.84px;font-size:12px;line-height:16px;color:#1a1a1a;letter-spacing:1.152px;left:404.15px;width:1000px;text-align:right;">4.317,05</div>
<div style="left:1410px;top:560px;width:257px;height:20px;overflow:hidden;">
<div class="t" style="top:-0.16px;font-size:12px;line-height:16px;color:#1a1a1a;letter-spacing:1.038px;left:2px;">Cod. Disp.: 011904040k4pvr Cashbon.Eu</div>
</div>
<div style="left:1784px;top:561px;width:21px;height:17px;background:#e3e3e3;border:1px solid #c2c2c2;"></div>
<svg style="left:1789px;top:565px" width="10" height="11"><path d="M1 0.5L8.5 9.5M8.5 0.5L1 9.5" stroke="#e24a4a" stroke-width="1.2"/></svg>
<div style="left:631px;top:580px;width:570px;height:20px;background:#c1f9c1;"></div>
<div style="left:1201px;top:580px;width:208px;height:20px;background:#fffde6;"></div>
<div style="left:1409px;top:580px;width:258px;height:20px;background:#fffde6;"></div>
<div style="left:19px;top:580px;width:1px;height:20px;background:#dedede;"></div>
<div style="left:53px;top:580px;width:1px;height:20px;background:#dedede;"></div>
<div style="left:262px;top:580px;width:1px;height:20px;background:#dedede;"></div>
<div style="left:471px;top:580px;width:1px;height:20px;background:#dedede;"></div>
<div style="left:570px;top:580px;width:1px;height:20px;background:#dedede;"></div>
<div style="left:631px;top:580px;width:1px;height:20px;background:#b5e6b5;"></div>
<div style="left:753px;top:580px;width:1px;height:20px;background:#b5e6b5;"></div>
<div style="left:943px;top:580px;width:1px;height:20px;background:#b5e6b5;"></div>
<div style="left:1201px;top:580px;width:1px;height:20px;background:#b5e6b5;"></div>
<div style="left:1305px;top:580px;width:1px;height:20px;background:#dedede;"></div>
<div style="left:1409px;top:580px;width:1px;height:20px;background:#dedede;"></div>
<div style="left:1667px;top:580px;width:1px;height:20px;background:#dedede;"></div>
<div style="left:1722px;top:580px;width:1px;height:20px;background:#dedede;"></div>
<div style="left:1782px;top:580px;width:1px;height:20px;background:#dedede;"></div>
<div style="left:1807px;top:580px;width:1px;height:20px;background:#dedede;"></div>
<div style="left:0px;top:599px;width:631px;height:1px;background:#e2e2e2;"></div>
<div style="left:631px;top:599px;width:570px;height:1px;background:#b3e3b3;"></div>
<div style="left:1201px;top:599px;width:466px;height:1px;background:#e2dfc6;"></div>
<div style="left:1409px;top:599px;width:258px;height:1px;background:#e2dfc6;"></div>
<div style="left:1782px;top:599px;width:25px;height:1px;background:#e2e2e2;"></div>
<div class="t" style="top:579.84px;font-size:12px;line-height:16px;color:#1a1a1a;letter-spacing:1.344px;left:300.34px;width:1000px;text-align:right;">0,00</div>
<div class="t" style="top:579.84px;font-size:12px;line-height:16px;color:#1a1a1a;letter-spacing:1.344px;left:404.34px;width:1000px;text-align:right;">0,00</div>
<div style="left:1410px;top:580px;width:257px;height:20px;overflow:hidden;">
<div class="t" style="top:-0.16px;font-size:12px;line-height:16px;color:#1a1a1a;letter-spacing:1.038px;left:2px;">Cod. Disp.: 011904040k4pvr Cashbon.Eu</div>
</div>
<div style="left:1784px;top:581px;width:21px;height:17px;background:#e3e3e3;border:1px solid #c2c2c2;"></div>
<svg style="left:1789px;top:585px" width="10" height="11"><path d="M1 0.5L8.5 9.5M8.5 0.5L1 9.5" stroke="#e24a4a" stroke-width="1.2"/></svg>
<div style="left:19px;top:600px;width:1788px;height:20px;background:#fcd7b6;"></div>
<div style="left:53px;top:600px;width:1px;height:20px;background:#f2cdae;"></div>
<div style="left:262px;top:600px;width:1px;height:20px;background:#f2cdae;"></div>
<div style="left:471px;top:600px;width:1px;height:20px;background:#f2cdae;"></div>
<div style="left:570px;top:600px;width:1px;height:20px;background:#f2cdae;"></div>
<div style="left:631px;top:600px;width:1px;height:20px;background:#f2cdae;"></div>
<div style="left:753px;top:600px;width:1px;height:20px;background:#f2cdae;"></div>
<div style="left:943px;top:600px;width:1px;height:20px;background:#f2cdae;"></div>
<div style="left:1201px;top:600px;width:1px;height:20px;background:#f2cdae;"></div>
<div style="left:1305px;top:600px;width:1px;height:20px;background:#f2cdae;"></div>
<div style="left:1409px;top:600px;width:1px;height:20px;background:#f2cdae;"></div>
<div style="left:1667px;top:600px;width:1px;height:20px;background:#f2cdae;"></div>
<div style="left:1722px;top:600px;width:1px;height:20px;background:#f2cdae;"></div>
<div style="left:1782px;top:600px;width:1px;height:20px;background:#f2cdae;"></div>
<div style="left:1807px;top:600px;width:1px;height:20px;background:#f2cdae;"></div>
<div style="left:19px;top:618px;width:1788px;height:2px;background:#555555;"></div>
<div class="t" style="top:599.84px;font-size:12px;line-height:16px;color:#111;font-weight:bold;-webkit-text-stroke:0.45px currentColor;font-style:italic;letter-spacing:1.177px;left:197.18px;width:1000px;text-align:right;">TOTALE</div>
<div class="t" style="top:599.84px;font-size:12px;line-height:16px;color:#111;font-weight:bold;-webkit-text-stroke:0.45px currentColor;letter-spacing:2.165px;left:301.17px;width:1000px;text-align:right;">4.317,05</div>
<div class="t" style="top:599.84px;font-size:12px;line-height:16px;color:#111;font-weight:bold;-webkit-text-stroke:0.45px currentColor;letter-spacing:2.165px;left:405.17px;width:1000px;text-align:right;">4.317,05</div>
<div style="left:631px;top:620px;width:570px;height:20px;background:#fff;"></div>
<div style="left:1201px;top:620px;width:208px;height:20px;background:#fff;"></div>
<div style="left:1409px;top:620px;width:258px;height:20px;background:#fffde6;"></div>
<div style="left:19px;top:620px;width:1px;height:20px;background:#dedede;"></div>
<div style="left:53px;top:620px;width:1px;height:20px;background:#dedede;"></div>
<div style="left:262px;top:620px;width:1px;height:20px;background:#dedede;"></div>
<div style="left:471px;top:620px;width:1px;height:20px;background:#dedede;"></div>
<div style="left:570px;top:620px;width:1px;height:20px;background:#dedede;"></div>
<div style="left:631px;top:620px;width:1px;height:20px;background:#dedede;"></div>
<div style="left:753px;top:620px;width:1px;height:20px;background:#dedede;"></div>
<div style="left:943px;top:620px;width:1px;height:20px;background:#dedede;"></div>
<div style="left:1201px;top:620px;width:1px;height:20px;background:#dedede;"></div>
<div style="left:1305px;top:620px;width:1px;height:20px;background:#dedede;"></div>
<div style="left:1409px;top:620px;width:1px;height:20px;background:#dedede;"></div>
<div style="left:1667px;top:620px;width:1px;height:20px;background:#dedede;"></div>
<div style="left:1722px;top:620px;width:1px;height:20px;background:#dedede;"></div>
<div style="left:1782px;top:620px;width:1px;height:20px;background:#dedede;"></div>
<div style="left:1807px;top:620px;width:1px;height:20px;background:#dedede;"></div>
<div style="left:0px;top:639px;width:631px;height:1px;background:#e2e2e2;"></div>
<div style="left:631px;top:639px;width:570px;height:1px;background:#e2e2e2;"></div>
<div style="left:1201px;top:639px;width:466px;height:1px;background:#e2e2e2;"></div>
<div style="left:1409px;top:639px;width:258px;height:1px;background:#e2dfc6;"></div>
<div style="left:1782px;top:639px;width:25px;height:1px;background:#e2e2e2;"></div>
<div class="t" style="top:619.84px;font-size:12px;line-height:16px;color:#1a1a1a;letter-spacing:1.152px;left:300.15px;width:1000px;text-align:right;">5.808,00</div>
<div class="t" style="top:619.84px;font-size:12px;line-height:16px;color:#1a1a1a;letter-spacing:1.344px;left:404.34px;width:1000px;text-align:right;">0,00</div>
<div style="left:1410px;top:620px;width:257px;height:20px;overflow:hidden;">
<div class="t" style="top:-0.16px;font-size:12px;line-height:16px;color:#1a1a1a;letter-spacing:1.045px;left:2px;">Cod. Disp.: 011904170yciu8 Suppbon.Eu</div>
</div>
<div style="left:631px;top:640px;width:570px;height:20px;background:#c1f9c1;"></div>
<div style="left:1201px;top:640px;width:208px;height:20px;background:#fffde6;"></div>
<div style="left:1409px;top:640px;width:258px;height:20px;background:#fffde6;"></div>
<div style="left:19px;top:640px;width:1px;height:20px;background:#dedede;"></div>
<div style="left:53px;top:640px;width:1px;height:20px;background:#dedede;"></div>
<div style="left:262px;top:640px;width:1px;height:20px;background:#dedede;"></div>
<div style="left:471px;top:640px;width:1px;height:20px;background:#dedede;"></div>
<div style="left:570px;top:640px;width:1px;height:20px;background:#dedede;"></div>
<div style="left:631px;top:640px;width:1px;height:20px;background:#b5e6b5;"></div>
<div style="left:753px;top:640px;width:1px;height:20px;background:#b5e6b5;"></div>
<div style="left:943px;top:640px;width:1px;height:20px;background:#b5e6b5;"></div>
<div style="left:1201px;top:640px;width:1px;height:20px;background:#b5e6b5;"></div>
<div style="left:1305px;top:640px;width:1px;height:20px;background:#dedede;"></div>
<div style="left:1409px;top:640px;width:1px;height:20px;background:#dedede;"></div>
<div style="left:1667px;top:640px;width:1px;height:20px;background:#dedede;"></div>
<div style="left:1722px;top:640px;width:1px;height:20px;background:#dedede;"></div>
<div style="left:1782px;top:640px;width:1px;height:20px;background:#dedede;"></div>
<div style="left:1807px;top:640px;width:1px;height:20px;background:#dedede;"></div>
<div style="left:0px;top:659px;width:631px;height:1px;background:#e2e2e2;"></div>
<div style="left:631px;top:659px;width:570px;height:1px;background:#b3e3b3;"></div>
<div style="left:1201px;top:659px;width:466px;height:1px;background:#e2dfc6;"></div>
<div style="left:1409px;top:659px;width:258px;height:1px;background:#e2dfc6;"></div>
<div style="left:1782px;top:659px;width:25px;height:1px;background:#e2e2e2;"></div>
<div class="t" style="top:639.84px;font-size:12px;line-height:16px;color:#1a1a1a;letter-spacing:1.344px;left:300.34px;width:1000px;text-align:right;">0,00</div>
<div class="t" style="top:639.84px;font-size:12px;line-height:16px;color:#1a1a1a;letter-spacing:1.152px;left:404.15px;width:1000px;text-align:right;">5.808,00</div>
<div style="left:1410px;top:640px;width:257px;height:20px;overflow:hidden;">
<div class="t" style="top:-0.16px;font-size:12px;line-height:16px;color:#1a1a1a;letter-spacing:1.045px;left:2px;">Cod. Disp.: 011904170yciu8 Suppbon.Eu</div>
</div>
<div style="left:1784px;top:641px;width:21px;height:17px;background:#e3e3e3;border:1px solid #c2c2c2;"></div>
<svg style="left:1789px;top:645px" width="10" height="11"><path d="M1 0.5L8.5 9.5M8.5 0.5L1 9.5" stroke="#e24a4a" stroke-width="1.2"/></svg>
<div style="left:631px;top:660px;width:570px;height:20px;background:#c1f9c1;"></div>
<div style="left:1201px;top:660px;width:208px;height:20px;background:#fffde6;"></div>
<div style="left:1409px;top:660px;width:258px;height:20px;background:#fffde6;"></div>
<div style="left:19px;top:660px;width:1px;height:20px;background:#dedede;"></div>
<div style="left:53px;top:660px;width:1px;height:20px;background:#dedede;"></div>
<div style="left:262px;top:660px;width:1px;height:20px;background:#dedede;"></div>
<div style="left:471px;top:660px;width:1px;height:20px;background:#dedede;"></div>
<div style="left:570px;top:660px;width:1px;height:20px;background:#dedede;"></div>
<div style="left:631px;top:660px;width:1px;height:20px;background:#b5e6b5;"></div>
<div style="left:753px;top:660px;width:1px;height:20px;background:#b5e6b5;"></div>
<div style="left:943px;top:660px;width:1px;height:20px;background:#b5e6b5;"></div>
<div style="left:1201px;top:660px;width:1px;height:20px;background:#b5e6b5;"></div>
<div style="left:1305px;top:660px;width:1px;height:20px;background:#dedede;"></div>
<div style="left:1409px;top:660px;width:1px;height:20px;background:#dedede;"></div>
<div style="left:1667px;top:660px;width:1px;height:20px;background:#dedede;"></div>
<div style="left:1722px;top:660px;width:1px;height:20px;background:#dedede;"></div>
<div style="left:1782px;top:660px;width:1px;height:20px;background:#dedede;"></div>
<div style="left:1807px;top:660px;width:1px;height:20px;background:#dedede;"></div>
<div style="left:0px;top:679px;width:631px;height:1px;background:#e2e2e2;"></div>
<div style="left:631px;top:679px;width:570px;height:1px;background:#b3e3b3;"></div>
<div style="left:1201px;top:679px;width:466px;height:1px;background:#e2dfc6;"></div>
<div style="left:1409px;top:679px;width:258px;height:1px;background:#e2dfc6;"></div>
<div style="left:1782px;top:679px;width:25px;height:1px;background:#e2e2e2;"></div>
<div class="t" style="top:659.84px;font-size:12px;line-height:16px;color:#1a1a1a;letter-spacing:1.344px;left:300.34px;width:1000px;text-align:right;">0,00</div>
<div class="t" style="top:659.84px;font-size:12px;line-height:16px;color:#1a1a1a;letter-spacing:1.344px;left:404.34px;width:1000px;text-align:right;">0,00</div>
<div style="left:1410px;top:660px;width:257px;height:20px;overflow:hidden;">
<div class="t" style="top:-0.16px;font-size:12px;line-height:16px;color:#1a1a1a;letter-spacing:1.045px;left:2px;">Cod. Disp.: 011904170yciu8 Suppbon.Eu</div>
</div>
<div style="left:1784px;top:661px;width:21px;height:17px;background:#e3e3e3;border:1px solid #c2c2c2;"></div>
<svg style="left:1789px;top:665px" width="10" height="11"><path d="M1 0.5L8.5 9.5M8.5 0.5L1 9.5" stroke="#e24a4a" stroke-width="1.2"/></svg>
<div style="left:19px;top:680px;width:1788px;height:20px;background:#fcd7b6;"></div>
<div style="left:53px;top:680px;width:1px;height:20px;background:#f2cdae;"></div>
<div style="left:262px;top:680px;width:1px;height:20px;background:#f2cdae;"></div>
<div style="left:471px;top:680px;width:1px;height:20px;background:#f2cdae;"></div>
<div style="left:570px;top:680px;width:1px;height:20px;background:#f2cdae;"></div>
<div style="left:631px;top:680px;width:1px;height:20px;background:#f2cdae;"></div>
<div style="left:753px;top:680px;width:1px;height:20px;background:#f2cdae;"></div>
<div style="left:943px;top:680px;width:1px;height:20px;background:#f2cdae;"></div>
<div style="left:1201px;top:680px;width:1px;height:20px;background:#f2cdae;"></div>
<div style="left:1305px;top:680px;width:1px;height:20px;background:#f2cdae;"></div>
<div style="left:1409px;top:680px;width:1px;height:20px;background:#f2cdae;"></div>
<div style="left:1667px;top:680px;width:1px;height:20px;background:#f2cdae;"></div>
<div style="left:1722px;top:680px;width:1px;height:20px;background:#f2cdae;"></div>
<div style="left:1782px;top:680px;width:1px;height:20px;background:#f2cdae;"></div>
<div style="left:1807px;top:680px;width:1px;height:20px;background:#f2cdae;"></div>
<div style="left:19px;top:698px;width:1788px;height:2px;background:#555555;"></div>
<div class="t" style="top:679.84px;font-size:12px;line-height:16px;color:#111;font-weight:bold;-webkit-text-stroke:0.45px currentColor;font-style:italic;letter-spacing:1.177px;left:197.18px;width:1000px;text-align:right;">TOTALE</div>
<div class="t" style="top:679.84px;font-size:12px;line-height:16px;color:#111;font-weight:bold;-webkit-text-stroke:0.45px currentColor;letter-spacing:2.165px;left:301.17px;width:1000px;text-align:right;">5.808,00</div>
<div class="t" style="top:679.84px;font-size:12px;line-height:16px;color:#111;font-weight:bold;-webkit-text-stroke:0.45px currentColor;letter-spacing:2.165px;left:405.17px;width:1000px;text-align:right;">5.808,00</div>
<div style="left:1668px;top:40px;width:54px;height:59px;background:#fff;"></div>
<div style="left:1723px;top:40px;width:59px;height:59px;background:#fff;"></div>
<div style="left:1667px;top:99px;width:115px;height:1px;background:#e2e2e2;"></div>
<svg style="left:1689px;top:62.5px" width="12" height="12"><defs><radialGradient id="gd" cx="40%" cy="35%" r="65%"><stop offset="0" stop-color="#a8f080"/><stop offset="0.55" stop-color="#3cb82c"/><stop offset="1" stop-color="#1a7a14"/></radialGradient></defs><circle cx="6" cy="6" r="5" fill="url(#gd)" stroke="#1f6a18" stroke-width="0.6"/></svg>
<svg style="left:1742px;top:60.5px" width="15" height="15"><rect x="1.5" y="1.5" width="12" height="12" fill="#fff" stroke="#333" stroke-width="1.2"/><path d="M3.8 7.6l2.6 2.6 5-6" fill="none" stroke="#444" stroke-width="1.6"/></svg>
<svg style="left:26px;top:40.69999999999999px" width="15" height="15"><rect x="1.5" y="1.5" width="12" height="12" fill="#fff" stroke="#333" stroke-width="1.2"/></svg>
<div style="left:1668px;top:120px;width:54px;height:59px;background:#fff;"></div>
<div style="left:1723px;top:120px;width:59px;height:59px;background:#fff;"></div>
<div style="left:1667px;top:179px;width:115px;height:1px;background:#e2e2e2;"></div>
<svg style="left:1689px;top:142.5px" width="12" height="12"><defs><radialGradient id="gd" cx="40%" cy="35%" r="65%"><stop offset="0" stop-color="#a8f080"/><stop offset="0.55" stop-color="#3cb82c"/><stop offset="1" stop-color="#1a7a14"/></radialGradient></defs><circle cx="6" cy="6" r="5" fill="url(#gd)" stroke="#1f6a18" stroke-width="0.6"/></svg>
<svg style="left:1742px;top:140.5px" width="15" height="15"><rect x="1.5" y="1.5" width="12" height="12" fill="#fff" stroke="#333" stroke-width="1.2"/><path d="M3.8 7.6l2.6 2.6 5-6" fill="none" stroke="#444" stroke-width="1.6"/></svg>
<svg style="left:26px;top:120.69999999999999px" width="15" height="15"><rect x="1.5" y="1.5" width="12" height="12" fill="#fff" stroke="#333" stroke-width="1.2"/></svg>
<div style="left:1668px;top:200px;width:54px;height:39px;background:#fff;"></div>
<div style="left:1723px;top:200px;width:59px;height:39px;background:#fff;"></div>
<div style="left:1667px;top:239px;width:115px;height:1px;background:#e2e2e2;"></div>
<svg style="left:1689px;top:212.5px" width="12" height="12"><defs><radialGradient id="rd" cx="40%" cy="35%" r="65%"><stop offset="0" stop-color="#ff9a9a"/><stop offset="0.55" stop-color="#d42a2a"/><stop offset="1" stop-color="#8a1010"/></radialGradient></defs><circle cx="6" cy="6" r="5" fill="url(#rd)" stroke="#7a1010" stroke-width="0.6"/></svg>
<svg style="left:1742px;top:210.5px" width="15" height="15"><rect x="1.5" y="1.5" width="12" height="12" fill="#fff" stroke="#333" stroke-width="1.2"/></svg>
<svg style="left:26px;top:200.7px" width="15" height="15"><rect x="1.5" y="1.5" width="12" height="12" fill="#fff" stroke="#333" stroke-width="1.2"/></svg>
<div style="left:1668px;top:260px;width:54px;height:39px;background:#fff;"></div>
<div style="left:1723px;top:260px;width:59px;height:39px;background:#fff;"></div>
<div style="left:1667px;top:299px;width:115px;height:1px;background:#e2e2e2;"></div>
<svg style="left:1689px;top:272.5px" width="12" height="12"><defs><radialGradient id="rd" cx="40%" cy="35%" r="65%"><stop offset="0" stop-color="#ff9a9a"/><stop offset="0.55" stop-color="#d42a2a"/><stop offset="1" stop-color="#8a1010"/></radialGradient></defs><circle cx="6" cy="6" r="5" fill="url(#rd)" stroke="#7a1010" stroke-width="0.6"/></svg>
<svg style="left:1742px;top:270.5px" width="15" height="15"><rect x="1.5" y="1.5" width="12" height="12" fill="#fff" stroke="#333" stroke-width="1.2"/></svg>
<svg style="left:26px;top:260.70000000000005px" width="15" height="15"><rect x="1.5" y="1.5" width="12" height="12" fill="#fff" stroke="#333" stroke-width="1.2"/></svg>
<div style="left:1668px;top:320px;width:54px;height:59px;background:#fff;"></div>
<div style="left:1723px;top:320px;width:59px;height:59px;background:#fff;"></div>
<div style="left:1667px;top:379px;width:115px;height:1px;background:#e2e2e2;"></div>
<svg style="left:1689px;top:342.5px" width="12" height="12"><defs><radialGradient id="gd" cx="40%" cy="35%" r="65%"><stop offset="0" stop-color="#a8f080"/><stop offset="0.55" stop-color="#3cb82c"/><stop offset="1" stop-color="#1a7a14"/></radialGradient></defs><circle cx="6" cy="6" r="5" fill="url(#gd)" stroke="#1f6a18" stroke-width="0.6"/></svg>
<svg style="left:1742px;top:340.5px" width="15" height="15"><rect x="1.5" y="1.5" width="12" height="12" fill="#fff" stroke="#333" stroke-width="1.2"/><path d="M3.8 7.6l2.6 2.6 5-6" fill="none" stroke="#444" stroke-width="1.6"/></svg>
<svg style="left:26px;top:320.70000000000005px" width="15" height="15"><rect x="1.5" y="1.5" width="12" height="12" fill="#fff" stroke="#333" stroke-width="1.2"/></svg>
<div style="left:1668px;top:400px;width:54px;height:39px;background:#fff;"></div>
<div style="left:1723px;top:400px;width:59px;height:39px;background:#fff;"></div>
<div style="left:1667px;top:439px;width:115px;height:1px;background:#e2e2e2;"></div>
<svg style="left:1689px;top:412.5px" width="12" height="12"><defs><radialGradient id="rd" cx="40%" cy="35%" r="65%"><stop offset="0" stop-color="#ff9a9a"/><stop offset="0.55" stop-color="#d42a2a"/><stop offset="1" stop-color="#8a1010"/></radialGradient></defs><circle cx="6" cy="6" r="5" fill="url(#rd)" stroke="#7a1010" stroke-width="0.6"/></svg>
<svg style="left:1742px;top:410.5px" width="15" height="15"><rect x="1.5" y="1.5" width="12" height="12" fill="#fff" stroke="#333" stroke-width="1.2"/></svg>
<svg style="left:26px;top:400.70000000000005px" width="15" height="15"><rect x="1.5" y="1.5" width="12" height="12" fill="#fff" stroke="#333" stroke-width="1.2"/></svg>
<div style="left:1668px;top:460px;width:54px;height:59px;background:#fff;"></div>
<div style="left:1723px;top:460px;width:59px;height:59px;background:#fff;"></div>
<div style="left:1667px;top:519px;width:115px;height:1px;background:#e2e2e2;"></div>
<svg style="left:1689px;top:482.5px" width="12" height="12"><defs><radialGradient id="gd" cx="40%" cy="35%" r="65%"><stop offset="0" stop-color="#a8f080"/><stop offset="0.55" stop-color="#3cb82c"/><stop offset="1" stop-color="#1a7a14"/></radialGradient></defs><circle cx="6" cy="6" r="5" fill="url(#gd)" stroke="#1f6a18" stroke-width="0.6"/></svg>
<svg style="left:1742px;top:480.5px" width="15" height="15"><rect x="1.5" y="1.5" width="12" height="12" fill="#fff" stroke="#333" stroke-width="1.2"/><path d="M3.8 7.6l2.6 2.6 5-6" fill="none" stroke="#444" stroke-width="1.6"/></svg>
<svg style="left:26px;top:460.70000000000005px" width="15" height="15"><rect x="1.5" y="1.5" width="12" height="12" fill="#fff" stroke="#333" stroke-width="1.2"/></svg>
<div style="left:1668px;top:540px;width:54px;height:59px;background:#fff;"></div>
<div style="left:1723px;top:540px;width:59px;height:59px;background:#fff;"></div>
<div style="left:1667px;top:599px;width:115px;height:1px;background:#e2e2e2;"></div>
<svg style="left:1689px;top:562.5px" width="12" height="12"><defs><radialGradient id="gd" cx="40%" cy="35%" r="65%"><stop offset="0" stop-color="#a8f080"/><stop offset="0.55" stop-color="#3cb82c"/><stop offset="1" stop-color="#1a7a14"/></radialGradient></defs><circle cx="6" cy="6" r="5" fill="url(#gd)" stroke="#1f6a18" stroke-width="0.6"/></svg>
<svg style="left:1742px;top:560.5px" width="15" height="15"><rect x="1.5" y="1.5" width="12" height="12" fill="#fff" stroke="#333" stroke-width="1.2"/><path d="M3.8 7.6l2.6 2.6 5-6" fill="none" stroke="#444" stroke-width="1.6"/></svg>
<svg style="left:26px;top:540.7px" width="15" height="15"><rect x="1.5" y="1.5" width="12" height="12" fill="#fff" stroke="#333" stroke-width="1.2"/></svg>
<div style="left:1668px;top:620px;width:54px;height:59px;background:#fff;"></div>
<div style="left:1723px;top:620px;width:59px;height:59px;background:#fff;"></div>
<div style="left:1667px;top:679px;width:115px;height:1px;background:#e2e2e2;"></div>
<svg style="left:1689px;top:642.5px" width="12" height="12"><defs><radialGradient id="gd" cx="40%" cy="35%" r="65%"><stop offset="0" stop-color="#a8f080"/><stop offset="0.55" stop-color="#3cb82c"/><stop offset="1" stop-color="#1a7a14"/></radialGradient></defs><circle cx="6" cy="6" r="5" fill="url(#gd)" stroke="#1f6a18" stroke-width="0.6"/></svg>
<svg style="left:1742px;top:640.5px" width="15" height="15"><rect x="1.5" y="1.5" width="12" height="12" fill="#fff" stroke="#333" stroke-width="1.2"/><path d="M3.8 7.6l2.6 2.6 5-6" fill="none" stroke="#444" stroke-width="1.6"/></svg>
<svg style="left:26px;top:620.7px" width="15" height="15"><rect x="1.5" y="1.5" width="12" height="12" fill="#fff" stroke="#333" stroke-width="1.2"/></svg>
<div style="left:0px;top:640px;width:20px;height:19px;background:#dce9f6;"></div>
<div class="t" style="top:639.84px;font-size:12px;line-height:16px;color:#1a1a1a;letter-spacing:1.234px;left:635px;">40GIIM</div>
<div style="left:755px;top:640px;width:185px;height:17px;background:#000;"></div>
<div class="t" style="top:319.84px;font-size:12px;line-height:16px;color:#1e1e1e;letter-spacing:-0.209px;left:56px;">C</div>
<div class="t" style="top:459.84px;font-size:12px;line-height:16px;color:#1e1e1e;letter-spacing:1.832px;left:56px;">I</div>
</div>
<div style="left:1899px;top:240px;width:16px;height:725px;background:#f0f0f0;"></div>
<div style="left:1900px;top:662px;width:14px;height:278px;background:#c8c8c8;"></div>
<svg style="left:1898px;top:230px" width="16" height="8"><rect x="2" y="1.5" width="12" height="4" rx="1.5" fill="none" stroke="#d8d8d8"/></svg>
<svg style="left:1900px;top:238px" width="14" height="12"><path d="M2.5 8.5L7 4l4.5 4.5" fill="none" stroke="#333" stroke-width="2.2"/></svg>
<svg style="left:1900px;top:950px" width="14" height="12"><path d="M2.5 3L7 7.5l4.5-4.5" fill="none" stroke="#333" stroke-width="2.2"/></svg>
<div style="left:4px;top:972px;width:1699px;height:43px;background:#fff;border:1px solid #6a6a6a;"></div>
<div style="left:221px;top:973px;width:1px;height:40px;background:#dcdcdc;"></div>
<div style="left:479px;top:973px;width:1px;height:40px;background:#dcdcdc;"></div>
<div style="left:678px;top:973px;width:1px;height:40px;background:#dcdcdc;"></div>
<div style="left:222px;top:992px;width:457px;height:1px;background:#dcdcdc;"></div>
<div class="t" style="top:977.84px;font-size:12px;line-height:16px;color:#222;letter-spacing:1.046px;left:-387.48px;width:1000px;text-align:center;">Riepilogo conto registrazioni</div>
<div class="t" style="top:991.84px;font-size:12px;line-height:16px;color:#222;letter-spacing:1.066px;left:-387.47px;width:1000px;text-align:center;">selezionate</div>
<div class="t" style="top:972.84px;font-size:12px;line-height:16px;color:#222;letter-spacing:0.826px;left:-150.59px;width:1000px;text-align:center;">Totale DARE</div>
<div class="t" style="top:992.84px;font-size:12px;line-height:16px;color:#222;letter-spacing:0.826px;left:-150.59px;width:1000px;text-align:center;">Totale AVERE</div>
<div class="t" style="top:972.84px;font-size:12px;line-height:16px;color:#111;font-weight:bold;-webkit-text-stroke:0.45px currentColor;letter-spacing:2.164px;left:-325.84px;width:1000px;text-align:right;">16.626,26</div>
<div class="t" style="top:992.84px;font-size:12px;line-height:16px;color:#111;font-weight:bold;-webkit-text-stroke:0.45px currentColor;letter-spacing:2.164px;left:-325.84px;width:1000px;text-align:right;">16.626,26</div>
<div style="left:1726px;top:972px;width:190px;height:42px;background:linear-gradient(#e2ecf8,#c9dbf0);border:1px solid #b4c8df;border-radius:2px;"></div>
<svg style="left:1732px;top:977px" width="28" height="32"><rect x="2" y="15" width="22" height="15" fill="#d9a45a" stroke="#b07830"/><rect x="2" y="15" width="22" height="4" fill="#e8c080"/><path d="M9 1h8v8h5l-9 9-9-9h5z" fill="#5cc84a" stroke="#2f8a24" stroke-width="0.8"/></svg>
<div class="t" style="top:977.84px;font-size:12px;line-height:16px;color:#2a3a55;letter-spacing:1.172px;left:1336.59px;width:1000px;text-align:center;">Registra in prima nota</div>
<div class="t" style="top:992.84px;font-size:12px;line-height:16px;color:#2a3a55;letter-spacing:1.488px;left:1336.74px;width:1000px;text-align:center;">(10/25)</div>
<div style="left:0px;top:1015px;width:1918px;height:2px;background:#e6edf5;"></div>
<div style="left:0px;top:1017px;width:1918px;height:19px;background:#1d4a8c;"></div>
<div style="left:64px;top:278px;width:1032px;height:629px;background:#f5f5f5;border:1px solid #2e4a68;box-shadow:0 0 6px rgba(110,150,210,0.45);border-color:#1c3050;"></div>
<svg style="left:71px;top:285px" width="18" height="15"><defs><linearGradient id="mon" x1="0" y1="0" x2="1" y2="1"><stop offset="0" stop-color="#3a58b8"/><stop offset="1" stop-color="#9ab8f0"/></linearGradient></defs><path d="M1.5 2.5L11 1.5V11L1.5 12z" fill="url(#mon)" stroke="#6a7290" stroke-width="0.8"/><path d="M1 12.6L11.5 11.3L16 12.6L5.5 14.3z" fill="#d8d2b8" stroke="#a8a290" stroke-width="0.5"/><path d="M12.5 11.5L16.5 4" stroke="#9a6a60" stroke-width="2.2"/><path d="M13 3.5L15 2.5" stroke="#c8c8d0" stroke-width="1.5"/></svg>
<div class="t" style="top:287.19px;font-size:11px;line-height:14px;color:#444;letter-spacing:0.37px;left:196.19px;width:1000px;text-align:center;">Elenco partite aperte</div>
<svg style="left:1074px;top:287px" width="12" height="11"><path d="M1 0.5L10.5 10M10.5 0.5L1 10" stroke="#333" stroke-width="1.5"/></svg>
<div style="left:251px;top:279px;width:72px;height:4px;background:#f2a33a;"></div>
<div style="left:251px;top:283px;width:72px;height:49px;background:linear-gradient(#fdf6ea,#fcf3e4);"></div>
<div style="left:65px;top:331px;width:1030px;height:1px;background:#cfcfcf;"></div>
<div style="left:65px;top:332px;width:1030px;height:93px;background:#fafafa;"></div>
<div style="left:67px;top:307px;width:184px;height:26px;background:#fafafa;border:1px solid #cdcdcd;border-bottom:none;"></div>
<div class="t" style="top:311.84px;font-size:12px;line-height:16px;color:#3a5a85;letter-spacing:0.195px;left:80px;">ELENCO PARTITE APERTE</div>
<div class="t" style="top:311.84px;font-size:12px;line-height:16px;color:#2a2a2a;letter-spacing:0.492px;left:263px;">STAMPA</div>
<div style="left:116px;top:336px;width:1px;height:84px;background:#d6d6d6;"></div>
<div style="left:246px;top:336px;width:1px;height:84px;background:#d6d6d6;"></div>
<div style="left:537px;top:336px;width:1px;height:84px;background:#d6d6d6;"></div>
<div style="left:607px;top:336px;width:1px;height:84px;background:#d6d6d6;"></div>
<svg style="left:73px;top:339px" width="34" height="34"><defs><radialGradient id="gq90" cx="42%" cy="35%" r="70%"><stop offset="0" stop-color="#3f7ee0"/><stop offset="0.65" stop-color="#1d4fbf"/><stop offset="1" stop-color="#15388f"/></radialGradient></defs>
<circle cx="17" cy="17" r="15.8" fill="#aecbf0"/><circle cx="17" cy="17" r="14.5" fill="#f4f8ff"/><circle cx="17" cy="17" r="13.5" fill="#1a3c96"/><circle cx="17" cy="17" r="12.700000000000001" fill="url(#gq90)"/>
<text x="17" y="26.3" text-anchor="middle" font-family="Liberation Sans" font-weight="bold" font-size="25" fill="#fff">?</text></svg>
<div class="t" style="top:372.84px;font-size:12px;line-height:16px;color:#333;letter-spacing:1.119px;left:-409.44px;width:1000px;text-align:center;">Guida</div>
<div style="left:124px;top:364px;width:13px;height:13px;background:#fff;border:1px solid #b5b5b5;"></div>
<div class="t" style="top:363.84px;font-size:12px;line-height:16px;color:#333;letter-spacing:1.151px;left:142px;">Seleziona tutte</div>
<div style="left:254px;top:353px;width:13px;height:13px;background:#fff;border:1px solid #b5b5b5;"></div>
<div class="t" style="top:352.84px;font-size:12px;line-height:16px;color:#333;letter-spacing:1.113px;left:272px;">Carica tutte le partite aperte dei clienti</div>
<div style="left:254px;top:376px;width:13px;height:13px;background:#fff;border:1px solid #b5b5b5;"></div>
<div class="t" style="top:375.84px;font-size:12px;line-height:16px;color:#333;letter-spacing:1.148px;left:272px;">Carica tutte le partite aperte dei fornitori</div>
<div class="t" style="top:407.84px;font-size:12px;line-height:16px;color:#333;letter-spacing:1.342px;left:-108.33px;width:1000px;text-align:center;">filtri</div>
<svg style="left:555px;top:346px" width="34" height="19"><defs><linearGradient id="ga" x1="0" y1="0" x2="1" y2="0"><stop offset="0" stop-color="#c0f0c0"/><stop offset="0.5" stop-color="#3ab84a"/><stop offset="1" stop-color="#1c9a30"/></linearGradient></defs><path d="M20 1l12 8.5-12 8.5z" fill="#b82020"/><path d="M1 6h14V1l12 8.5L15 18v-5H1z" fill="url(#ga)"/></svg>
<div class="t" style="top:372.84px;font-size:12px;line-height:16px;color:#333;letter-spacing:0.818px;left:72.41px;width:1000px;text-align:center;">Esci ed</div>
<div class="t" style="top:387.84px;font-size:12px;line-height:16px;color:#333;letter-spacing:1.298px;left:72.65px;width:1000px;text-align:center;">aggiorna</div>
<div style="left:65px;top:425px;width:1030px;height:2px;background:#5a5a5a;"></div>
<div style="left:66px;top:427px;width:17px;height:18px;background:#d9d9d9;"></div>
<div style="left:83px;top:427px;width:27px;height:18px;background:#1f6fd0;"></div>
<div style="left:90px;top:429px;width:13px;height:13px;background:#fff;border:1px solid #0a4fa0;"></div>
<div style="left:110px;top:427px;width:965px;height:18px;background:#fffde6;"></div>
<div style="left:253px;top:427px;width:1px;height:18px;background:#ece8cc;"></div>
<div style="left:482px;top:427px;width:1px;height:18px;background:#ece8cc;"></div>
<div style="left:570px;top:427px;width:1px;height:18px;background:#ece8cc;"></div>
<div style="left:655px;top:427px;width:1px;height:18px;background:#ece8cc;"></div>
<div style="left:760px;top:427px;width:1px;height:18px;background:#ece8cc;"></div>
<div style="left:865px;top:427px;width:1px;height:18px;background:#ece8cc;"></div>
<div style="left:970px;top:427px;width:1px;height:18px;background:#ece8cc;"></div>
<div style="left:1075px;top:427px;width:19px;height:18px;background:#fff;"></div>
<div style="left:65px;top:445px;width:1030px;height:2px;background:#6a6a6a;"></div>
<div style="left:66px;top:447px;width:1010px;height:49px;background:#f0f0f0;"></div>
<div style="left:1076px;top:447px;width:18px;height:378px;background:#adadad;"></div>
<div style="left:83px;top:447px;width:1px;height:49px;background:#a8a8a8;"></div>
<div style="left:111px;top:447px;width:1px;height:49px;background:#a8a8a8;"></div>
<div style="left:253px;top:447px;width:1px;height:49px;background:#a8a8a8;"></div>
<div style="left:482px;top:447px;width:1px;height:49px;background:#a8a8a8;"></div>
<div style="left:570px;top:447px;width:1px;height:49px;background:#a8a8a8;"></div>
<div style="left:655px;top:447px;width:1px;height:49px;background:#a8a8a8;"></div>
<div style="left:760px;top:447px;width:1px;height:49px;background:#a8a8a8;"></div>
<div style="left:865px;top:447px;width:1px;height:49px;background:#a8a8a8;"></div>
<div style="left:970px;top:447px;width:1px;height:49px;background:#a8a8a8;"></div>
<div style="left:1076px;top:447px;width:1px;height:49px;background:#a8a8a8;"></div>
<div style="left:66px;top:495px;width:1010px;height:1px;background:#a8a8a8;"></div>
<div class="t" style="top:462.84px;font-size:12px;line-height:16px;color:#111;letter-spacing:0.991px;left:87px;">Sel.</div>
<div class="t" style="top:462.84px;font-size:12px;line-height:16px;color:#111;letter-spacing:1.228px;left:115px;">Conto</div>
<div class="t" style="top:462.84px;font-size:12px;line-height:16px;color:#111;letter-spacing:0.983px;left:257px;">Descrizione</div>
<div class="t" style="top:462.84px;font-size:12px;line-height:16px;color:#111;letter-spacing:1.226px;left:486px;">Data reg.</div>
<div class="t" style="top:462.84px;font-size:12px;line-height:16px;color:#111;letter-spacing:1.242px;left:574px;">Num. doc.</div>
<div class="t" style="top:462.84px;font-size:12px;line-height:16px;color:#111;letter-spacing:1.013px;left:659px;">Caus. contabile</div>
<div class="t" style="top:455.84px;font-size:12px;line-height:16px;color:#111;letter-spacing:1.772px;left:764px;">Importo</div>
<div class="t" style="top:469.84px;font-size:12px;line-height:16px;color:#111;letter-spacing:1.131px;left:764px;">registazione</div>
<div class="t" style="top:448.84px;font-size:12px;line-height:16px;color:#111;letter-spacing:1.772px;left:869px;">Importo</div>
<div class="t" style="top:462.84px;font-size:12px;line-height:16px;color:#111;letter-spacing:1.105px;left:869px;">scaricarato in</div>
<div class="t" style="top:476.84px;font-size:12px;line-height:16px;color:#111;letter-spacing:1.449px;left:869px;">altre</div>
<div class="t" style="top:448.84px;font-size:12px;line-height:16px;color:#111;letter-spacing:1.54px;left:974px;">Importo da</div>
<div class="t" style="top:462.84px;font-size:12px;line-height:16px;color:#111;letter-spacing:1.236px;left:974px;">pagare/riscuote</div>
<div class="t" style="top:476.84px;font-size:12px;line-height:16px;color:#111;letter-spacing:2.334px;left:974px;">re</div>
<div style="left:66px;top:496px;width:17px;height:22px;background:#f0f0f0;"></div>
<div style="left:83px;top:496px;width:887px;height:22px;background:#98f898;"></div>
<div style="left:970px;top:496px;width:106px;height:22px;background:#fffde6;"></div>
<div style="left:111px;top:496px;width:1px;height:22px;background:#b8eab8;"></div>
<div style="left:253px;top:496px;width:1px;height:22px;background:#b8eab8;"></div>
<div style="left:482px;top:496px;width:1px;height:22px;background:#b8eab8;"></div>
<div style="left:570px;top:496px;width:1px;height:22px;background:#b8eab8;"></div>
<div style="left:655px;top:496px;width:1px;height:22px;background:#b8eab8;"></div>
<div style="left:760px;top:496px;width:1px;height:22px;background:#b8eab8;"></div>
<div style="left:865px;top:496px;width:1px;height:22px;background:#b8eab8;"></div>
<div style="left:970px;top:496px;width:1px;height:22px;background:#b8eab8;"></div>
<div style="left:83px;top:496px;width:28px;height:22px;border:1px dotted #333;"></div>
<svg style="left:89px;top:499px" width="16" height="16"><rect x="2.5" y="1.5" width="12" height="12" fill="#fff" stroke="#333" stroke-width="1.2"/><path d="M4.8 7.6l2.6 2.6 5-6" fill="none" stroke="#444" stroke-width="1.6"/></svg>
<div class="t" style="top:498.84px;font-size:12px;line-height:16px;color:#111;letter-spacing:1.234px;left:115px;">40GIIM</div>
<div style="left:256px;top:497px;width:224px;height:18px;background:#000;"></div>
<div class="t" style="top:498.84px;font-size:12px;line-height:16px;color:#111;letter-spacing:1.373px;left:486px;">12/04/2019</div>
<div class="t" style="top:498.84px;font-size:12px;line-height:16px;color:#111;letter-spacing:0.793px;left:574px;">4/FE</div>
<div class="t" style="top:498.84px;font-size:12px;line-height:16px;color:#111;letter-spacing:-0.066px;left:659px;">FV</div>
<div class="t" style="top:498.84px;font-size:12px;line-height:16px;color:#111;letter-spacing:1.152px;left:-137.85px;width:1000px;text-align:right;">5.808,00</div>
<div class="t" style="top:498.84px;font-size:12px;line-height:16px;color:#111;letter-spacing:1.344px;left:-31.66px;width:1000px;text-align:right;">0,00</div>
<div class="t" style="top:498.84px;font-size:12px;line-height:16px;color:#111;letter-spacing:1.152px;left:73.15px;width:1000px;text-align:right;">5.808,00</div>
<div style="left:65px;top:517px;width:1030px;height:1px;background:#6a6a6a;"></div>
<div style="left:65px;top:518px;width:1030px;height:307px;background:#adadad;"></div>
<div style="left:65px;top:825px;width:1030px;height:2px;background:#fbfbfb;"></div>
<div style="left:65px;top:827px;width:1030px;height:57px;background:#f4f4f4;"></div>
<div class="t" style="top:836.84px;font-size:12px;line-height:16px;color:#222;letter-spacing:1.138px;left:81px;">Conto banca: 50100</div>
<div class="t" style="top:835.84px;font-size:12px;line-height:16px;color:#111;font-weight:bold;-webkit-text-stroke:0.45px currentColor;letter-spacing:2.165px;left:311px;">5.808,00</div>
<div class="t" style="top:857.84px;font-size:12px;line-height:16px;color:#222;letter-spacing:1.105px;left:81px;">Totale registrazioni selezionate:</div>
<div class="t" style="top:857.84px;font-size:12px;line-height:16px;color:#111;font-weight:bold;-webkit-text-stroke:0.45px currentColor;letter-spacing:2.165px;left:311px;">5.808,00</div>
<div style="left:65px;top:884px;width:1030px;height:22px;background:#1e4b8e;"></div>
<svg style="left:0;top:0" width="1918" height="1036">
<rect x="947" y="227" width="259" height="45" fill="#dde9f6" stroke="#0a0ad8" stroke-width="4"/>
<rect x="947.5" y="909" width="259" height="19.5" fill="none" stroke="#0a0ad8" stroke-width="4"/>
<path d="M1138 279L1146 887" stroke="#0a0ae6" stroke-width="4.5"/>
<path d="M1140.5 886L1151.5 886L1146 897.5z" fill="#0a0ae6" stroke="#0a0ae6" stroke-width="1.2" stroke-linejoin="round"/>
<path d="M1032 920.5L741 538" stroke="#0a0ae6" stroke-width="4.2" stroke-linecap="round"/>
<path d="M733 528.5L746.5 535L736.5 543z" fill="#0a0ae6" stroke="#0a0ae6" stroke-width="1.5" stroke-linejoin="round"/>
<defs><radialGradient id="glow" cx="50%" cy="50%" r="50%"><stop offset="0" stop-color="#fff200" stop-opacity="1"/><stop offset="0.55" stop-color="#f6f040" stop-opacity="0.9"/><stop offset="1" stop-color="#f0f080" stop-opacity="0"/></radialGradient></defs><path d="M1054.6 913.6L1060.4 914.3L1054.8 903.9L1062.6 912.7L1064.0 905.0L1065.2 912.7L1069.0 908.3L1067.3 914.0L1080.3 909.4L1068.5 916.4L1077.8 919.4L1068.1 918.9L1073.2 924.7L1065.5 921.2L1062.6 924.9L1062.3 921.2L1054.8 930.1L1060.2 919.4L1048.2 919.8L1059.5 916.6z" fill="#f2ee30" stroke="#f8f4a0" stroke-width="0.5"/><circle cx="1064" cy="917" r="10" fill="url(#glow)"/>
<path d="M1066.5 918.5v14l3.3-3.2 2.8 5.5 2.2-1-2.8-5.4h4.6z" fill="#111" stroke="#fff" stroke-width="0.8"/>
</svg>
<div class="t" style="top:241.84px;font-size:12px;line-height:16px;color:#1e1e1e;letter-spacing:1.304px;left:576.65px;width:1000px;text-align:center;">Abbina fattura:</div>
</body></html>
